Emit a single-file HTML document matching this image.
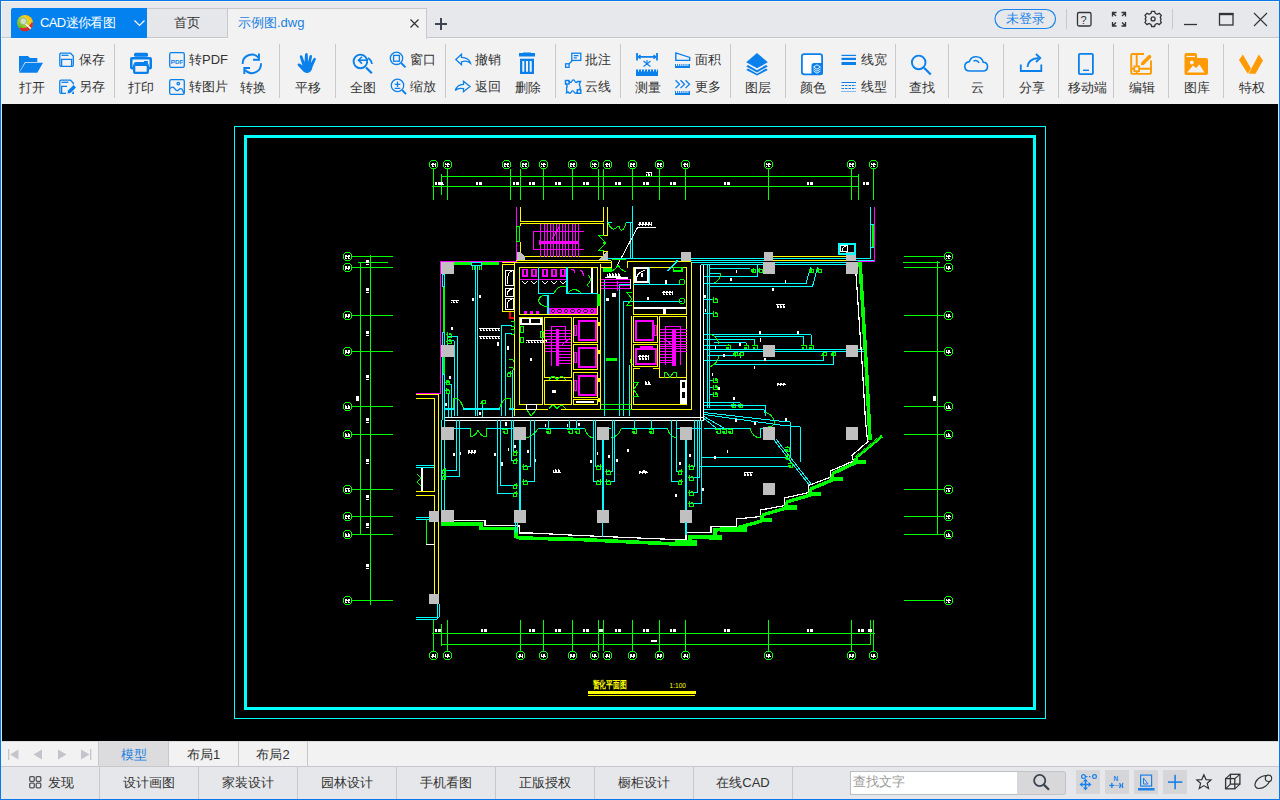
<!DOCTYPE html>
<html><head><meta charset="utf-8">
<style>
*{box-sizing:border-box}
html,body{margin:0;padding:0;width:1280px;height:800px;overflow:hidden;background:#e6e7ea;font-family:"Liberation Sans",sans-serif;}
.a{position:absolute}
#win{position:absolute;left:0;top:0;width:1280px;height:800px;border:1px solid #0a78e8;}
#title{position:absolute;left:1px;top:1px;width:1278px;height:37px;background:#e6e8eb;border-top:1px solid #f7f4f0;border-left:1px solid #f7f4f0;border-bottom:1px solid #c8c8cc}
#tb{position:absolute;left:1px;top:38px;width:1278px;height:66px;background:#f2f2f2;border-top:1px solid #f6f6f6}
#cv{position:absolute;left:2px;top:104px;width:1276px;height:637px;background:#000;}
#tabs{position:absolute;left:0px;top:741px;width:1279px;height:26px;background:#f2f2f2;border-bottom:1px solid #c8c8cc;border-top:1px solid #dcdce0}
#bot{position:absolute;left:1px;top:767px;width:1278px;height:32px;background:#e6e7ea;}
.sep{position:absolute;top:44px;width:1px;height:54px;background:#c9c9cc}
.lbl{position:absolute;font-size:13px;color:#333;white-space:nowrap;line-height:14px}
.big{position:absolute;top:82px;margin-left:1px;font-size:13px;color:#333;white-space:nowrap;line-height:12px;text-align:center;width:50px}
svg{position:absolute;overflow:visible}
.bt{position:absolute;top:767px;height:32px;font-size:13px;color:#333;line-height:32px;text-align:center;border-right:1px solid #c8c8cc}
.lt{position:absolute;top:741px;height:25px;font-size:13px;color:#333;line-height:27px;text-align:center;border-right:1px solid #c8c8cc;width:70px}
</style></head><body>
<div id="win"></div>
<div id="title"></div>
<div id="tb"></div>
<div id="cv"></div>
<div id="tabs"></div>
<div id="bot"></div>

<!-- title bar tabs -->
<div class="a" style="left:11px;top:8px;width:136px;height:30px;background:#0382ef;border-top-left-radius:2px"></div>
<div class="a" style="left:40px;top:14px;font-size:13px;line-height:18px;color:#fff;white-space:nowrap;letter-spacing:-0.6px">CAD迷你看图</div>
<div class="a" style="left:147px;top:8px;width:81px;height:30px;background:#e6e7ea;border:1px solid #c8c8cc;border-left:none"></div>
<div class="a" style="left:174px;top:14px;font-size:13px;line-height:18px;color:#333">首页</div>
<div class="a" style="left:228px;top:8px;width:199px;height:31px;background:#f2f2f2;border:1px solid #c8c8cc;border-bottom:none;border-left:none"></div>
<div class="a" style="left:238px;top:14px;font-size:13px;line-height:18px;color:#1a7fe0">示例图.dwg</div>

<!-- title icons -->
<svg style="left:0;top:0" width="1280" height="40">
<defs><linearGradient id="lg1" x1="0.1" y1="0.9" x2="0.9" y2="0.1"><stop offset="0" stop-color="#5bb02c"/><stop offset="0.45" stop-color="#a6cf2a"/><stop offset="0.75" stop-color="#f5d020"/><stop offset="1" stop-color="#f7b500"/></linearGradient></defs>
<circle cx="25" cy="23" r="8" fill="url(#lg1)"/>
<path d="M33 23 A8 8 0 0 1 19 28.5 L21 27.5 Q27 30 32 22 Z" fill="#d52b2b"/>
<circle cx="23.3" cy="21.3" r="3.3" fill="#cfe3c0" stroke="#9ab58a" stroke-width="1"/>
<path d="M25.6 23.8 L30.8 28.6" stroke="#f4efe6" stroke-width="1.8"/>
<path d="M134.5 20.5 L139.5 25.5 L144.5 20.5" fill="none" stroke="#fff" stroke-width="1.2"/>
<path d="M410.5 19.5 L418.5 27.5 M418.5 19.5 L410.5 27.5" stroke="#333" stroke-width="1.2"/>
<path d="M435 24 H447 M441 18 V30" stroke="#3d4550" stroke-width="2"/>
<rect x="995" y="9.5" width="60.5" height="19" rx="9.5" fill="none" stroke="#1a86ea" stroke-width="1.2"/>
<rect x="1066" y="9" width="1" height="20" fill="#c8c8cc"/>
<rect x="1172" y="9" width="1" height="20" fill="#c8c8cc"/>
<rect x="1077.5" y="12.5" width="13.5" height="13.5" rx="1.5" fill="none" stroke="#333" stroke-width="1.3"/>
<text x="1080.6" y="23.8" font-size="11" font-family="Liberation Sans" fill="#333">?</text>
<g fill="none" stroke="#333" stroke-width="1.3">
<path d="M1112.5 16.5 V12.5 H1116.5 M1112.5 12.5 L1116 16 M1121.5 12.5 H1125.5 V16.5 M1125.5 12.5 L1122 16 M1112.5 22 V26 H1116.5 M1112.5 26 L1116 22.5 M1121.5 26 H1125.5 V22 M1125.5 26 L1122 22.5"/>
<circle cx="1153.1" cy="18.9" r="2"/>
<path d="M1184 24.5 H1197" stroke-width="1.3"/>
<rect x="1219.5" y="13.5" width="13.5" height="11.5" stroke-width="1.3"/>
<path d="M1254 13 L1267 26 M1267 13 L1254 26" stroke-width="1.1"/>
</g>
<rect x="1219" y="13" width="14.3" height="2.2" fill="#333"/>
<path fill="none" stroke="#333" stroke-width="1.3" d="M1151.6 11.3 H1154.6 L1155.2 13.3 L1157.3 14.3 L1159.2 13.2 L1161.3 15.3 L1160.3 17.2 L1161 19.3 L1161 19.3 L1160.4 20.5 L1161.3 22.5 L1159.2 24.6 L1157.3 23.5 L1155.2 24.5 L1154.6 26.5 H1151.6 L1151 24.5 L1149 23.5 L1147 24.6 L1145 22.5 L1146 20.5 L1145.2 18.9 L1146 17.2 L1145 15.3 L1147 13.2 L1149 14.3 L1151 13.3 Z"/>
</svg>
<div class="a" style="left:1006px;top:10px;font-size:13px;line-height:18px;color:#1a86ea">未登录</div>

<!-- separators -->
<div class="sep" style="left:114px"></div>
<div class="sep" style="left:279px"></div>
<div class="sep" style="left:335px"></div>
<div class="sep" style="left:445px"></div>
<div class="sep" style="left:555px"></div>
<div class="sep" style="left:620px"></div>
<div class="sep" style="left:730px"></div>
<div class="sep" style="left:785px"></div>
<div class="sep" style="left:895px"></div>
<div class="sep" style="left:948px"></div>
<div class="sep" style="left:1003px"></div>
<div class="sep" style="left:1058px"></div>
<div class="sep" style="left:1113px"></div>
<div class="sep" style="left:1168px"></div>
<div class="sep" style="left:1223px"></div>

<!-- big labels -->
<div class="big" style="left:6px">打开</div>
<div class="big" style="left:115px">打印</div>
<div class="big" style="left:227px">转换</div>
<div class="big" style="left:282px">平移</div>
<div class="big" style="left:337px">全图</div>
<div class="big" style="left:502px">删除</div>
<div class="big" style="left:622px">测量</div>
<div class="big" style="left:732px">图层</div>
<div class="big" style="left:787px">颜色</div>
<div class="big" style="left:896px">查找</div>
<div class="big" style="left:951px">云</div>
<div class="big" style="left:1006px">分享</div>
<div class="big" style="left:1061px">移动端</div>
<div class="big" style="left:1116px">编辑</div>
<div class="big" style="left:1171px">图库</div>
<div class="big" style="left:1226px">特权</div>

<!-- small labels -->
<div class="lbl" style="left:79px;top:53px">保存</div>
<div class="lbl" style="left:79px;top:80px">另存</div>
<div class="lbl" style="left:189px;top:53px">转PDF</div>
<div class="lbl" style="left:189px;top:80px">转图片</div>
<div class="lbl" style="left:410px;top:53px">窗口</div>
<div class="lbl" style="left:410px;top:80px">缩放</div>
<div class="lbl" style="left:475px;top:53px">撤销</div>
<div class="lbl" style="left:475px;top:80px">返回</div>
<div class="lbl" style="left:585px;top:53px">批注</div>
<div class="lbl" style="left:585px;top:80px">云线</div>
<div class="lbl" style="left:695px;top:53px">面积</div>
<div class="lbl" style="left:695px;top:80px">更多</div>
<div class="lbl" style="left:861px;top:53px">线宽</div>
<div class="lbl" style="left:861px;top:80px">线型</div>

<!--ICONS-->
<!-- open folder -->
<svg style="left:0;top:0" width="1280" height="110">
<g fill="#0a80ec">
<path d="M19 56 H28 L30 58 H37.3 V61.9 H25 L19 72.5 Z"/>
<path d="M25.5 62.8 H43 L37.3 72.8 H19.2 Z"/>
</g>
<g fill="none" stroke="#0a80ec" stroke-width="1.3">
<!-- save -->
<path d="M60 53.2 H70.5 L73.3 56 V65.2 Q73.3 66.3 72.2 66.3 H61 Q59.8 66.3 59.8 65.2 V54.3 Q59.8 53.2 61 53.2 Z"/>
<path d="M61.5 55.3 H68.5"/>
<path d="M61.6 66 V59.3 H71.6 V66"/>
<!-- save as -->
<path d="M66 93.3 H61 Q59.8 93.3 59.8 92.2 V81.3 Q59.8 80.2 61 80.2 H70.5 L73.3 83 V84.5"/>
<path d="M61.5 82.3 H68.5"/>
<path d="M61.6 93 V86.3 H67"/>
<path d="M73.3 91.5 V93.3 H72"/>
<path d="M67.5 93.6 L68 90.6 L73.6 85 L76 87.4 L70.4 93 Z" fill="#0a80ec" stroke="none"/>
<!-- pdf -->
<rect x="169.7" y="52.7" width="14.6" height="14.6" rx="1.6"/>
<!-- image -->
<rect x="169.7" y="79.7" width="14.6" height="14.6" rx="1.6"/>
<circle cx="178.3" cy="83.6" r="1.3"/>
<path d="M170.2 88.5 Q172.5 85.5 175 88.8 Q177 92 179 89.5 Q181 87.5 182.5 90 L184 93.5"/>
<!-- window zoom -->
<circle cx="396.5" cy="58.3" r="6.2"/>
<rect x="393.6" y="55.4" width="5.8" height="5.8"/>
<!-- zoom +- -->
<circle cx="397.5" cy="85.4" r="6.2"/>
<path d="M394.7 84.3 H400.3 M397.5 81.6 V87 M394.7 88.4 H400.3"/>
<!-- undo -->
<path d="M461.5 54.3 L455.8 59.5 L461.5 64.8 V61.8 Q467 60 470.5 63.2 Q469 57.5 461.5 57.3 Z"/>
<!-- redo -->
<path d="M463.5 81.3 L470 86.5 L463.5 91.7 V88.7 Q458 87.5 455.3 90.5 Q457 84.5 463.5 84.3 Z"/>
<!-- annot -->
<rect x="571.8" y="53.2" width="9" height="7.2"/>
<path d="M573.8 55.6 H578.5 M573.8 57.8 H576.8"/>
<rect x="565.6" y="63.8" width="3.5" height="3.5"/>
<path d="M568.8 64 L572.5 60.5"/>
<!-- cloud line -->
<rect x="565.5" y="80.5" width="3.5" height="3.5" stroke-width="1.4"/>
<rect x="577.3" y="89.8" width="3.5" height="3.5" stroke-width="1.4"/>
<path d="M569 81 Q570.5 84 572 81 Q573.5 78.5 575 81.5 Q576 83.5 577.5 81.5 L580.5 81.5 Q578.5 84 580 86.5 Q581 89 579 89.5 M577.3 92 Q575.5 94.5 574 92 Q572.5 89.5 571 92.5 Q569.5 94 568 92 L566.5 93 Q567 90 566.5 88 Q568 86 566 84" stroke-width="1.3"/>
<!-- area -->
<path d="M675.8 52.9 V60.4 H689.7 V57.4 Z" stroke-width="1.4"/>
<!-- more chevrons -->
<path d="M675.5 80.3 L679.5 84.2 L675.5 88.1 M680.5 80.3 L684.5 84.2 L680.5 88.1 M685.5 80.3 L689.5 84.2 L685.5 88.1"/>
<!-- find -->
<circle cx="918.7" cy="62.4" r="6.8" stroke-width="1.9"/>
<!-- cloud -->
<path d="M970 71 H983 Q987.5 71 987.5 66.5 Q987.5 62.3 983.2 62.2 Q982 56.8 976 56.8 Q971 56.8 969.3 61.6 Q964.8 62.3 964.8 66.5 Q964.8 71 970 71 Z" stroke-width="1.6"/>
<path d="M973.5 61 Q977.5 59.5 979 63" stroke-width="1.6"/>
<!-- share -->
<path d="M1020.8 64.5 V71 H1041.3 V64.5" stroke-width="1.8"/>
<path d="M1027.5 67 Q1028 59 1038.5 58" stroke-width="1.8"/>
<path d="M1036 54 L1040.3 58 L1036 62" stroke-width="1.8"/>
<!-- phone -->
<rect x="1078.9" y="53.9" width="14" height="20.2" rx="1" stroke-width="1.8"/>
</g>
<g fill="#0a80ec">
<!-- pdf text -->
<text x="170.8" y="64" font-size="6.2" font-weight="bold" font-family="Liberation Sans" textLength="12.6" lengthAdjust="spacingAndGlyphs">PDF</text>
<!-- printer -->
<rect x="134" y="52.8" width="14" height="4" rx="1.5"/>
<path d="M132 57 H150 Q152 57 152 59 V67.5 Q152 69.5 150 69.5 H149 V66.5 Q149 64 146.5 64 H135.5 Q133 64 133 66.5 V69.5 H132 Q130 69.5 130 67.5 V59 Q130 57 132 57 Z M132.5 59.5 V67 H133 Q133.5 62 136 62 H146 Q148.5 62 149 67 H149.5 V59.5 Z" fill-rule="evenodd"/>
<path d="M135 64 H147 Q149 64 149 66 V72 Q149 74 147 74 H135 Q133 74 133 72 V66 Q133 64 135 64 Z M135.3 66 V71.8 H146.7 V66 Z" fill-rule="evenodd"/>
<rect x="144" y="61" width="4" height="1.8"/>
<!-- trash -->
<rect x="519" y="53" width="16" height="3.5"/>
<rect x="523" y="52.5" width="8" height="2"/>
<path d="M520 58.8 H534 V74 H520 Z M522.3 61 V71.8 H524.3 V61 Z M526 61 V71.8 H528 V61 Z M529.7 61 V71.8 H531.7 V61 Z" fill-rule="evenodd"/>
<!-- area ruler -->
<path d="M675 66 H690 V68 H675 Z"/>
<path d="M675 80.5 Z"/>
<path d="M675 93 H690 V95 H675 Z"/>
<!-- line widths -->
<rect x="841.5" y="54.8" width="14.5" height="1.2"/>
<rect x="841.5" y="57.8" width="14.5" height="2.2"/>
<rect x="841.5" y="62" width="14.5" height="3"/>
</g>
<g stroke="#0a80ec" stroke-width="1" fill="none">
<path d="M675.5 64 V66 M677.6 64 V66 M679.7 64 V66 M681.8 64 V66 M683.9 64 V66 M686 64 V66 M688.1 64 V66 M689.5 64 V66"/>
<path d="M675.5 91 V93 M677.6 91 V93 M679.7 91 V93 M681.8 91 V93 M683.9 91 V93 M686 91 V93 M688.1 91 V93 M689.5 91 V93"/>
<path d="M841.5 82.5 H856" />
<path d="M841.5 85.5 H856" stroke-dasharray="2.5 1"/>
<path d="M841.5 88.5 H856" stroke-dasharray="2.5 1"/>
<path d="M841.5 91.5 H856" stroke-dasharray="1 1"/>
</g>
<!-- zoom handles -->
<g stroke="#0a80ec" stroke-width="1.9" stroke-linecap="butt" fill="none">
<path d="M401.2 63 L405.5 67.3"/>
<path d="M402.2 90.1 L406 94"/>
<path d="M924 67.8 L930.8 74.5" stroke-width="2.2"/>
<!-- refresh -->
<path d="M242.6 64 A9.2 9.2 0 0 1 258.6 57.6"/>
<path d="M261 63.3 A9.2 9.2 0 0 1 245 70"/>
<path d="M259 53.5 V59.8 H253"/>
<path d="M244.3 74 V68 H250"/>
<!-- full view -->
<circle cx="360.4" cy="61.4" r="6.8" stroke-width="1.9"/>
<path d="M366 67.5 L371.8 73.2" stroke-width="2.3"/>
<path d="M368 58 Q371.5 60 372 64" stroke-width="1.6"/>
<path d="M358.5 60.2 H367" stroke-width="1.6"/>
<path d="M362 56.8 L358.5 60.2 L362 63.6" stroke-width="1.6"/>
<!-- measure -->
<path d="M637 53 V60.5 M657 53 V60.5 M638 56.8 H656" stroke-width="1.8"/>
<path d="M640.5 55 L638.3 56.8 L640.5 58.6 M653.5 55 L655.7 56.8 L653.5 58.6" stroke-width="1.5"/>
<path d="M647 60 V65 M643.5 61 L647 64 L650.5 61 M643.5 66.5 L647 64 L650.5 66.5" stroke-width="1.1"/>
<!-- phone bar -->
<path d="M1083 70.3 H1089" stroke-width="1.4"/>
</g>
<g fill="#0a80ec">
<path d="M636 69.5 H658 V76 H636 Z"/>
</g>
<g stroke="#f2f2f2" stroke-width="1">
<path d="M638.5 69.3 V71.5 M641.5 69.3 V71.5 M644.5 69.3 V71.5 M647.5 69.3 V71.5 M650.5 69.3 V71.5 M653.5 69.3 V71.5 M656.5 69.3 V71.5"/>
</g>
<!-- hand -->
<path fill="#0a80ec" d="M302 70 L297.8 65.5 Q297 64 298.5 63.5 Q299.8 63.2 301.2 64.5 L302.5 65.8 L299.8 57 Q299.5 55.5 300.8 55.3 Q302 55.2 302.5 56.5 L304.5 62 L305 54.5 Q305.2 53 306.5 53 Q307.7 53 307.8 54.5 L308 62 L309.5 56 Q310 54.8 311.2 55 Q312.3 55.3 312 56.8 L310.8 63 L313.5 58.5 Q314.3 57.5 315.3 58 Q316.2 58.7 315.6 60 L312.5 67 Q311.5 73 306.5 73 Q304 73 302 70 Z"/>
<!-- layers -->
<g fill="#0a80ec">
<path d="M746.2 62.3 L757 53 L767.8 62.3 L757 68.3 Z"/>
<path d="M746.2 66.5 L748 65 L757 70.2 L766 65 L767.8 66.5 L757 72.5 Z"/>
<path d="M746.2 70 L748 68.5 L757 73.7 L766 68.5 L767.8 70 L757 75.5 Z"/>
</g>
<!-- color -->
<rect x="801.9" y="54.1" width="20.2" height="20.2" rx="2.3" fill="#fff" stroke="#0a80ec" stroke-width="1.8"/>
<path d="M811.5 75 V65.5 Q811.5 63 814 63 H823 V72.5 Q823 75 820.5 75 Z" fill="#0a80ec"/>
<g fill="none" stroke="#fff" stroke-width="0.9">
<path d="M813.5 67 L817 64.8 L820.5 67 L817 69.2 Z"/>
<path d="M813.5 69 L817 71.2 L820.5 69"/>
<path d="M813.5 71 L817 73.2 L820.5 71"/>
</g>
<!-- orange icons -->
<g fill="none" stroke="#ff9a00" stroke-width="1.9">
<path d="M1144 54 H1132.5 Q1131.2 54 1131.2 55.3 V72.6 Q1131.2 73.9 1132.5 73.9 H1149.7 Q1151 73.9 1151 72.6 V60.5"/>
<path d="M1136.7 54 V74 M1131.2 68.8 H1151"/>
</g>
<rect x="1134.3" y="66.4" width="4.8" height="4.8" fill="#f2f2f2" stroke="#ff9a00" stroke-width="1.7"/>
<path d="M1141.2 62.5 L1148.5 55.2 Q1149.5 54.3 1150.5 55.2 L1151 55.8 Q1151.8 56.8 1151 57.7 L1143.7 65 L1141 65.3 Z" fill="#ff9a00"/>
<path d="M1184.5 55 Q1184.5 53 1186.5 53 H1195 Q1197 53 1197 55 V58 H1206 Q1208 58 1208 60 V73 Q1208 75 1206 75 H1186.5 Q1184.5 75 1184.5 73 Z" fill="#ff9a00"/>
<path d="M1186.5 56.5 H1195" stroke="#f2f2f2" stroke-width="1.2"/>
<circle cx="1191.8" cy="62.5" r="1.9" fill="#f2f2f2"/>
<path d="M1187 72.5 L1193 65.5 L1196 68 L1199.5 64.5 L1204.5 72.5 Z" fill="#f2f2f2"/>
<path d="M1239 60 L1242.8 54.5 L1251 68.5 L1247.8 73.8 Z" fill="#ff9a00"/>
<path d="M1248.7 73.8 L1258.8 54.5 L1263 60.5 L1255.5 73.8 Z" fill="#ff9a00"/>
</svg>

<!--/ICONS-->

<!--DRAWING-->
<svg style="left:0;top:0" width="1280" height="800" shape-rendering="crispEdges" fill="none"><defs><pattern id="tp" x="0" y="0" width="3" height="4" patternUnits="userSpaceOnUse"><rect x="0" y="0" width="3" height="1" fill="#fff"/><rect x="0" y="0" width="1" height="4" fill="#fff"/><rect x="1" y="2" width="1" height="2" fill="#fff"/></pattern></defs>
<rect x="234.5" y="126.5" width="811.0" height="592.0" stroke="#00ffff" stroke-width="1" fill="none"/>
<rect x="245.5" y="136.5" width="789.0" height="572.0" stroke="#00ffff" stroke-width="3" fill="none"/>
<circle cx="433.5" cy="164.5" r="4.2" stroke="#00ff00" stroke-width="1.2" fill="none"/>
<rect x="431.0" y="162.5" width="5.0" height="4.0" fill="url(#tp)"/>
<circle cx="447.5" cy="164.5" r="4.2" stroke="#00ff00" stroke-width="1.2" fill="none"/>
<rect x="445.0" y="162.5" width="5.0" height="4.0" fill="url(#tp)"/>
<circle cx="506.5" cy="164.5" r="4.2" stroke="#00ff00" stroke-width="1.2" fill="none"/>
<rect x="504.0" y="162.5" width="5.0" height="4.0" fill="url(#tp)"/>
<circle cx="524.5" cy="164.5" r="4.2" stroke="#00ff00" stroke-width="1.2" fill="none"/>
<rect x="522.0" y="162.5" width="5.0" height="4.0" fill="url(#tp)"/>
<circle cx="543.5" cy="164.5" r="4.2" stroke="#00ff00" stroke-width="1.2" fill="none"/>
<rect x="541.0" y="162.5" width="5.0" height="4.0" fill="url(#tp)"/>
<circle cx="572.5" cy="164.5" r="4.2" stroke="#00ff00" stroke-width="1.2" fill="none"/>
<rect x="570.0" y="162.5" width="5.0" height="4.0" fill="url(#tp)"/>
<circle cx="594.5" cy="164.5" r="4.2" stroke="#00ff00" stroke-width="1.2" fill="none"/>
<rect x="592.0" y="162.5" width="5.0" height="4.0" fill="url(#tp)"/>
<circle cx="607.5" cy="164.5" r="4.2" stroke="#00ff00" stroke-width="1.2" fill="none"/>
<rect x="605.0" y="162.5" width="5.0" height="4.0" fill="url(#tp)"/>
<circle cx="632.5" cy="164.5" r="4.2" stroke="#00ff00" stroke-width="1.2" fill="none"/>
<rect x="630.0" y="162.5" width="5.0" height="4.0" fill="url(#tp)"/>
<circle cx="659.5" cy="164.5" r="4.2" stroke="#00ff00" stroke-width="1.2" fill="none"/>
<rect x="657.0" y="162.5" width="5.0" height="4.0" fill="url(#tp)"/>
<circle cx="685.5" cy="164.5" r="4.2" stroke="#00ff00" stroke-width="1.2" fill="none"/>
<rect x="683.0" y="162.5" width="5.0" height="4.0" fill="url(#tp)"/>
<circle cx="768.5" cy="164.5" r="4.2" stroke="#00ff00" stroke-width="1.2" fill="none"/>
<rect x="766.0" y="162.5" width="5.0" height="4.0" fill="url(#tp)"/>
<circle cx="851.5" cy="164.5" r="4.2" stroke="#00ff00" stroke-width="1.2" fill="none"/>
<rect x="849.0" y="162.5" width="5.0" height="4.0" fill="url(#tp)"/>
<circle cx="873.5" cy="164.5" r="4.2" stroke="#00ff00" stroke-width="1.2" fill="none"/>
<rect x="871.0" y="162.5" width="5.0" height="4.0" fill="url(#tp)"/>
<path d="M433.5 168.5V199.5" stroke="#00ff00" stroke-width="1"/>
<path d="M447.5 168.5V199.5" stroke="#00ff00" stroke-width="1"/>
<path d="M510.5 168.5V199.5" stroke="#00ff00" stroke-width="1"/>
<path d="M520.5 168.5V199.5" stroke="#00ff00" stroke-width="1"/>
<path d="M543.5 168.5V199.5" stroke="#00ff00" stroke-width="1"/>
<path d="M572.5 168.5V199.5" stroke="#00ff00" stroke-width="1"/>
<path d="M598.5 168.5V199.5" stroke="#00ff00" stroke-width="1"/>
<path d="M603.5 168.5V199.5" stroke="#00ff00" stroke-width="1"/>
<path d="M632.5 168.5V199.5" stroke="#00ff00" stroke-width="1"/>
<path d="M659.5 168.5V199.5" stroke="#00ff00" stroke-width="1"/>
<path d="M685.5 168.5V199.5" stroke="#00ff00" stroke-width="1"/>
<path d="M768.5 168.5V199.5" stroke="#00ff00" stroke-width="1"/>
<path d="M851.5 168.5V199.5" stroke="#00ff00" stroke-width="1"/>
<path d="M873.5 168.5V199.5" stroke="#00ff00" stroke-width="1"/>
<path d="M441.5 176.5H858.5" stroke="#00ff00" stroke-width="1"/>
<path d="M432 186.5H858.5" stroke="#00ff00" stroke-width="1"/>
<path d="M441.5 174V195" stroke="#00ff00" stroke-width="1"/>
<path d="M858.5 174V199.5" stroke="#00ff00" stroke-width="1"/>
<rect x="434.5" y="182" width="2.0" height="3" fill="#ffffff"/>
<rect x="437.5" y="182" width="3.0" height="3" fill="#ffffff"/>
<rect x="476.0" y="182" width="2.0" height="3" fill="#ffffff"/>
<rect x="479.0" y="182" width="3.0" height="3" fill="#ffffff"/>
<rect x="512.5" y="182" width="2.0" height="3" fill="#ffffff"/>
<rect x="515.5" y="182" width="3.0" height="3" fill="#ffffff"/>
<rect x="529.0" y="182" width="2.0" height="3" fill="#ffffff"/>
<rect x="532.0" y="182" width="3.0" height="3" fill="#ffffff"/>
<rect x="555.0" y="182" width="2.0" height="3" fill="#ffffff"/>
<rect x="558.0" y="182" width="3.0" height="3" fill="#ffffff"/>
<rect x="582.5" y="182" width="2.0" height="3" fill="#ffffff"/>
<rect x="585.5" y="182" width="3.0" height="3" fill="#ffffff"/>
<rect x="615.0" y="182" width="2.0" height="3" fill="#ffffff"/>
<rect x="618.0" y="182" width="3.0" height="3" fill="#ffffff"/>
<rect x="643.0" y="182" width="2.0" height="3" fill="#ffffff"/>
<rect x="646.0" y="182" width="3.0" height="3" fill="#ffffff"/>
<rect x="669.5" y="182" width="2.0" height="3" fill="#ffffff"/>
<rect x="672.5" y="182" width="3.0" height="3" fill="#ffffff"/>
<rect x="724.0" y="182" width="2.0" height="3" fill="#ffffff"/>
<rect x="727.0" y="182" width="3.0" height="3" fill="#ffffff"/>
<rect x="807.0" y="182" width="2.0" height="3" fill="#ffffff"/>
<rect x="810.0" y="182" width="3.0" height="3" fill="#ffffff"/>
<rect x="863.0" y="182" width="2.0" height="3" fill="#ffffff"/>
<rect x="866.0" y="182" width="3.0" height="3" fill="#ffffff"/>
<rect x="438" y="182" width="6" height="3" fill="url(#tp)"/>
<rect x="646" y="172" width="6" height="4" fill="url(#tp)"/>
<circle cx="433.5" cy="655.5" r="4.2" stroke="#00ff00" stroke-width="1.2" fill="none"/>
<rect x="431.0" y="653.5" width="5.0" height="4.0" fill="url(#tp)"/>
<circle cx="447.5" cy="655.5" r="4.2" stroke="#00ff00" stroke-width="1.2" fill="none"/>
<rect x="445.0" y="653.5" width="5.0" height="4.0" fill="url(#tp)"/>
<circle cx="520.5" cy="655.5" r="4.2" stroke="#00ff00" stroke-width="1.2" fill="none"/>
<rect x="518.0" y="653.5" width="5.0" height="4.0" fill="url(#tp)"/>
<circle cx="543.5" cy="655.5" r="4.2" stroke="#00ff00" stroke-width="1.2" fill="none"/>
<rect x="541.0" y="653.5" width="5.0" height="4.0" fill="url(#tp)"/>
<circle cx="572.5" cy="655.5" r="4.2" stroke="#00ff00" stroke-width="1.2" fill="none"/>
<rect x="570.0" y="653.5" width="5.0" height="4.0" fill="url(#tp)"/>
<circle cx="594.5" cy="655.5" r="4.2" stroke="#00ff00" stroke-width="1.2" fill="none"/>
<rect x="592.0" y="653.5" width="5.0" height="4.0" fill="url(#tp)"/>
<circle cx="607.5" cy="655.5" r="4.2" stroke="#00ff00" stroke-width="1.2" fill="none"/>
<rect x="605.0" y="653.5" width="5.0" height="4.0" fill="url(#tp)"/>
<circle cx="632.5" cy="655.5" r="4.2" stroke="#00ff00" stroke-width="1.2" fill="none"/>
<rect x="630.0" y="653.5" width="5.0" height="4.0" fill="url(#tp)"/>
<circle cx="659.5" cy="655.5" r="4.2" stroke="#00ff00" stroke-width="1.2" fill="none"/>
<rect x="657.0" y="653.5" width="5.0" height="4.0" fill="url(#tp)"/>
<circle cx="685.5" cy="655.5" r="4.2" stroke="#00ff00" stroke-width="1.2" fill="none"/>
<rect x="683.0" y="653.5" width="5.0" height="4.0" fill="url(#tp)"/>
<circle cx="768.5" cy="655.5" r="4.2" stroke="#00ff00" stroke-width="1.2" fill="none"/>
<rect x="766.0" y="653.5" width="5.0" height="4.0" fill="url(#tp)"/>
<circle cx="851.5" cy="655.5" r="4.2" stroke="#00ff00" stroke-width="1.2" fill="none"/>
<rect x="849.0" y="653.5" width="5.0" height="4.0" fill="url(#tp)"/>
<circle cx="873.5" cy="655.5" r="4.2" stroke="#00ff00" stroke-width="1.2" fill="none"/>
<rect x="871.0" y="653.5" width="5.0" height="4.0" fill="url(#tp)"/>
<path d="M433.5 619.5V650.5" stroke="#00ff00" stroke-width="1"/>
<path d="M447.5 619.5V650.5" stroke="#00ff00" stroke-width="1"/>
<path d="M520.5 619.5V650.5" stroke="#00ff00" stroke-width="1"/>
<path d="M543.5 619.5V650.5" stroke="#00ff00" stroke-width="1"/>
<path d="M572.5 619.5V650.5" stroke="#00ff00" stroke-width="1"/>
<path d="M598.5 619.5V650.5" stroke="#00ff00" stroke-width="1"/>
<path d="M603.5 619.5V650.5" stroke="#00ff00" stroke-width="1"/>
<path d="M632.5 619.5V650.5" stroke="#00ff00" stroke-width="1"/>
<path d="M659.5 619.5V650.5" stroke="#00ff00" stroke-width="1"/>
<path d="M685.5 619.5V650.5" stroke="#00ff00" stroke-width="1"/>
<path d="M768.5 619.5V650.5" stroke="#00ff00" stroke-width="1"/>
<path d="M851.5 619.5V650.5" stroke="#00ff00" stroke-width="1"/>
<path d="M873.5 619.5V650.5" stroke="#00ff00" stroke-width="1"/>
<path d="M432 633.5H874.5" stroke="#00ff00" stroke-width="1"/>
<path d="M441 644.5H871" stroke="#00ff00" stroke-width="1"/>
<path d="M441.5 624V646" stroke="#00ff00" stroke-width="1"/>
<path d="M870.5 620V645" stroke="#00ff00" stroke-width="1"/>
<rect x="434.5" y="629" width="2.0" height="3" fill="#ffffff"/>
<rect x="437.5" y="629" width="3.0" height="3" fill="#ffffff"/>
<rect x="481.0" y="629" width="2.0" height="3" fill="#ffffff"/>
<rect x="484.0" y="629" width="3.0" height="3" fill="#ffffff"/>
<rect x="529.0" y="629" width="2.0" height="3" fill="#ffffff"/>
<rect x="532.0" y="629" width="3.0" height="3" fill="#ffffff"/>
<rect x="555.0" y="629" width="2.0" height="3" fill="#ffffff"/>
<rect x="558.0" y="629" width="3.0" height="3" fill="#ffffff"/>
<rect x="582.5" y="629" width="2.0" height="3" fill="#ffffff"/>
<rect x="585.5" y="629" width="3.0" height="3" fill="#ffffff"/>
<rect x="615.0" y="629" width="2.0" height="3" fill="#ffffff"/>
<rect x="618.0" y="629" width="3.0" height="3" fill="#ffffff"/>
<rect x="643.0" y="629" width="2.0" height="3" fill="#ffffff"/>
<rect x="646.0" y="629" width="3.0" height="3" fill="#ffffff"/>
<rect x="669.5" y="629" width="2.0" height="3" fill="#ffffff"/>
<rect x="672.5" y="629" width="3.0" height="3" fill="#ffffff"/>
<rect x="724.0" y="629" width="2.0" height="3" fill="#ffffff"/>
<rect x="727.0" y="629" width="3.0" height="3" fill="#ffffff"/>
<rect x="807.0" y="629" width="2.0" height="3" fill="#ffffff"/>
<rect x="810.0" y="629" width="3.0" height="3" fill="#ffffff"/>
<rect x="858.0" y="629" width="2.0" height="3" fill="#ffffff"/>
<rect x="861.0" y="629" width="3.0" height="3" fill="#ffffff"/>
<rect x="599" y="629" width="4" height="3" fill="#ffffff"/>
<rect x="868" y="629" width="4" height="3" fill="#ffffff"/>
<rect x="651" y="640" width="6" height="2" fill="#ffffff"/>
<circle cx="347.5" cy="256.5" r="4.2" stroke="#00ff00" stroke-width="1.2" fill="none"/>
<rect x="345" y="254.5" width="5" height="4.0" fill="url(#tp)"/>
<path d="M352 256.5H393" stroke="#00ff00" stroke-width="1"/>
<circle cx="347.5" cy="267.5" r="4.2" stroke="#00ff00" stroke-width="1.2" fill="none"/>
<rect x="345" y="265.5" width="5" height="4.0" fill="url(#tp)"/>
<path d="M352 267.5H393" stroke="#00ff00" stroke-width="1"/>
<circle cx="347.5" cy="315.5" r="4.2" stroke="#00ff00" stroke-width="1.2" fill="none"/>
<rect x="345" y="313.5" width="5" height="4.0" fill="url(#tp)"/>
<path d="M352 315.5H393" stroke="#00ff00" stroke-width="1"/>
<circle cx="347.5" cy="351.5" r="4.2" stroke="#00ff00" stroke-width="1.2" fill="none"/>
<rect x="345" y="349.5" width="5" height="4.0" fill="url(#tp)"/>
<path d="M352 351.5H393" stroke="#00ff00" stroke-width="1"/>
<circle cx="347.5" cy="406.5" r="4.2" stroke="#00ff00" stroke-width="1.2" fill="none"/>
<rect x="345" y="404.5" width="5" height="4.0" fill="url(#tp)"/>
<path d="M352 406.5H393" stroke="#00ff00" stroke-width="1"/>
<circle cx="347.5" cy="434.5" r="4.2" stroke="#00ff00" stroke-width="1.2" fill="none"/>
<rect x="345" y="432.5" width="5" height="4.0" fill="url(#tp)"/>
<path d="M352 434.5H393" stroke="#00ff00" stroke-width="1"/>
<circle cx="347.5" cy="489.5" r="4.2" stroke="#00ff00" stroke-width="1.2" fill="none"/>
<rect x="345" y="487.5" width="5" height="4.0" fill="url(#tp)"/>
<path d="M352 489.5H393" stroke="#00ff00" stroke-width="1"/>
<circle cx="347.5" cy="516.5" r="4.2" stroke="#00ff00" stroke-width="1.2" fill="none"/>
<rect x="345" y="514.5" width="5" height="4.0" fill="url(#tp)"/>
<path d="M352 516.5H393" stroke="#00ff00" stroke-width="1"/>
<circle cx="347.5" cy="534.5" r="4.2" stroke="#00ff00" stroke-width="1.2" fill="none"/>
<rect x="345" y="532.5" width="5" height="4.0" fill="url(#tp)"/>
<path d="M352 534.5H393" stroke="#00ff00" stroke-width="1"/>
<circle cx="347.5" cy="600.5" r="4.2" stroke="#00ff00" stroke-width="1.2" fill="none"/>
<rect x="345" y="598.5" width="5" height="4.0" fill="url(#tp)"/>
<path d="M352 600.5H393" stroke="#00ff00" stroke-width="1"/>
<path d="M358 262.5H388" stroke="#00ff00" stroke-width="1"/>
<path d="M360.5 262V535" stroke="#00ff00" stroke-width="1"/>
<path d="M370.5 255V605" stroke="#00ff00" stroke-width="1"/>
<rect x="366" y="260" width="3" height="3" fill="#ffffff"/>
<rect x="366" y="264" width="3" height="1" fill="#ffffff"/>
<rect x="366" y="288" width="3" height="3" fill="#ffffff"/>
<rect x="366" y="292" width="3" height="1" fill="#ffffff"/>
<rect x="366" y="331" width="3" height="3" fill="#ffffff"/>
<rect x="366" y="335" width="3" height="1" fill="#ffffff"/>
<rect x="366" y="375" width="3" height="3" fill="#ffffff"/>
<rect x="366" y="379" width="3" height="1" fill="#ffffff"/>
<rect x="366" y="418" width="3" height="3" fill="#ffffff"/>
<rect x="366" y="422" width="3" height="1" fill="#ffffff"/>
<rect x="366" y="459" width="3" height="3" fill="#ffffff"/>
<rect x="366" y="463" width="3" height="1" fill="#ffffff"/>
<rect x="366" y="495" width="3" height="3" fill="#ffffff"/>
<rect x="366" y="499" width="3" height="1" fill="#ffffff"/>
<rect x="366" y="523" width="3" height="3" fill="#ffffff"/>
<rect x="366" y="527" width="3" height="1" fill="#ffffff"/>
<rect x="366" y="564" width="3" height="3" fill="#ffffff"/>
<rect x="366" y="568" width="3" height="1" fill="#ffffff"/>
<rect x="356" y="396" width="3" height="5" fill="#ffffff"/>
<circle cx="948.5" cy="256.5" r="4.2" stroke="#00ff00" stroke-width="1.2" fill="none"/>
<rect x="946" y="254.5" width="5" height="4.0" fill="url(#tp)"/>
<path d="M904 256.5H944" stroke="#00ff00" stroke-width="1"/>
<circle cx="948.5" cy="267.5" r="4.2" stroke="#00ff00" stroke-width="1.2" fill="none"/>
<rect x="946" y="265.5" width="5" height="4.0" fill="url(#tp)"/>
<path d="M904 267.5H944" stroke="#00ff00" stroke-width="1"/>
<circle cx="948.5" cy="315.5" r="4.2" stroke="#00ff00" stroke-width="1.2" fill="none"/>
<rect x="946" y="313.5" width="5" height="4.0" fill="url(#tp)"/>
<path d="M904 315.5H944" stroke="#00ff00" stroke-width="1"/>
<circle cx="948.5" cy="351.5" r="4.2" stroke="#00ff00" stroke-width="1.2" fill="none"/>
<rect x="946" y="349.5" width="5" height="4.0" fill="url(#tp)"/>
<path d="M904 351.5H944" stroke="#00ff00" stroke-width="1"/>
<circle cx="948.5" cy="406.5" r="4.2" stroke="#00ff00" stroke-width="1.2" fill="none"/>
<rect x="946" y="404.5" width="5" height="4.0" fill="url(#tp)"/>
<path d="M904 406.5H944" stroke="#00ff00" stroke-width="1"/>
<circle cx="948.5" cy="434.5" r="4.2" stroke="#00ff00" stroke-width="1.2" fill="none"/>
<rect x="946" y="432.5" width="5" height="4.0" fill="url(#tp)"/>
<path d="M904 434.5H944" stroke="#00ff00" stroke-width="1"/>
<circle cx="948.5" cy="489.5" r="4.2" stroke="#00ff00" stroke-width="1.2" fill="none"/>
<rect x="946" y="487.5" width="5" height="4.0" fill="url(#tp)"/>
<path d="M904 489.5H944" stroke="#00ff00" stroke-width="1"/>
<circle cx="948.5" cy="516.5" r="4.2" stroke="#00ff00" stroke-width="1.2" fill="none"/>
<rect x="946" y="514.5" width="5" height="4.0" fill="url(#tp)"/>
<path d="M904 516.5H944" stroke="#00ff00" stroke-width="1"/>
<circle cx="948.5" cy="534.5" r="4.2" stroke="#00ff00" stroke-width="1.2" fill="none"/>
<rect x="946" y="532.5" width="5" height="4.0" fill="url(#tp)"/>
<path d="M904 534.5H944" stroke="#00ff00" stroke-width="1"/>
<circle cx="948.5" cy="600.5" r="4.2" stroke="#00ff00" stroke-width="1.2" fill="none"/>
<rect x="946" y="598.5" width="5" height="4.0" fill="url(#tp)"/>
<path d="M904 600.5H944" stroke="#00ff00" stroke-width="1"/>
<path d="M903 262.5H940" stroke="#00ff00" stroke-width="1"/>
<path d="M937.5 261V535" stroke="#00ff00" stroke-width="1"/>
<rect x="933" y="396" width="3" height="5" fill="#ffffff"/>
<text x="592.5" y="687.5" font-size="10" font-family="Liberation Sans" font-weight="bold" fill="#ffff00" textLength="34" lengthAdjust="spacingAndGlyphs">暂化平面图</text>
<text x="669.5" y="687.5" font-size="7.5" font-family="Liberation Sans" fill="#ffff00" textLength="16.5" lengthAdjust="spacingAndGlyphs">1:100</text>
<rect x="588" y="691" width="108" height="3" fill="#ffff00"/>
<path d="M588 695.5H695" stroke="#ffff00" stroke-width="1"/>
<path d="M516 207V262" stroke="#ff00ff" stroke-width="1"/>
<path d="M520.5 207V222" stroke="#ffff00" stroke-width="1"/>
<path d="M520 221.5H604" stroke="#ffff00" stroke-width="1"/>
<path d="M603.5 207V222" stroke="#ffff00" stroke-width="1"/>
<path d="M607.5 207V235" stroke="#ffff00" stroke-width="1"/>
<path d="M603.5 235H607.5" stroke="#ffff00" stroke-width="1"/>
<path d="M521 223.5H604" stroke="#ffff00" stroke-width="1"/>
<path d="M520.5 223V226" stroke="#ffff00" stroke-width="1"/>
<path d="M520.5 242V257" stroke="#ffff00" stroke-width="1"/>
<path d="M603.5 223V235" stroke="#ffff00" stroke-width="1"/>
<path d="M603.5 251V257" stroke="#ffff00" stroke-width="1"/>
<path d="M607.5 251V261" stroke="#ffff00" stroke-width="1"/>
<path d="M603.5 251H607.5" stroke="#ffff00" stroke-width="1"/>
<path d="M521 256.5H604" stroke="#ffff00" stroke-width="1"/>
<path d="M516.5 226V242" stroke="#00ff00" stroke-width="1"/>
<path d="M519.5 226V242" stroke="#00ff00" stroke-width="1"/>
<path d="M516 226.5H520" stroke="#00ff00" stroke-width="1"/>
<path d="M516 241.5H520" stroke="#00ff00" stroke-width="1"/>
<path d="M516.5 252 H520 L525 256.5 V260 H516.5 Z" fill="#c0c0c0"/>
<path d="M598 260 L607.5 251.5 V260 Z" fill="#c0c0c0"/>
<path d="M540.5 224V257" stroke="#ff00ff" stroke-width="1"/>
<path d="M544.5 224V257" stroke="#ff00ff" stroke-width="1"/>
<path d="M547.5 224V257" stroke="#ff00ff" stroke-width="1"/>
<path d="M550.5 224V257" stroke="#ff00ff" stroke-width="1"/>
<path d="M553.5 224V257" stroke="#ff00ff" stroke-width="1"/>
<path d="M556.5 224V257" stroke="#ff00ff" stroke-width="1"/>
<path d="M559.5 224V257" stroke="#ff00ff" stroke-width="1"/>
<path d="M562.5 224V257" stroke="#ff00ff" stroke-width="1"/>
<path d="M565.5 224V257" stroke="#ff00ff" stroke-width="1"/>
<path d="M568.5 224V257" stroke="#ff00ff" stroke-width="1"/>
<path d="M572.5 224V257" stroke="#ff00ff" stroke-width="1"/>
<path d="M575.5 224V257" stroke="#ff00ff" stroke-width="1"/>
<path d="M578.5 224V257" stroke="#ff00ff" stroke-width="1"/>
<path d="M533 231.5H583.5" stroke="#ff00ff" stroke-width="1"/>
<path d="M533 249.5H583.5" stroke="#ff00ff" stroke-width="1"/>
<path d="M533.5 231.5V249.5" stroke="#ff00ff" stroke-width="1"/>
<rect x="539" y="241" width="39" height="3" fill="#ff00ff"/>
<rect x="535.5" y="241" width="5.5" height="3" fill="#000"/>
<rect x="539" y="240" width="2" height="5" fill="#ff00ff"/>
<path d="M552 239 L560 225.5" stroke="#ff00ff" stroke-width="1" fill="none"/>
<path d="M608 222.5 Q612 232 616 228 Q619 224 620 229 Q623 233 626 223" stroke="#00ff00" stroke-width="1" fill="none"/>
<path d="M604 235.5 H598.5 L606 243 L598.5 250.5 H604" stroke="#00ff00" stroke-width="1" fill="none"/>
<rect x="603" y="242" width="3" height="2" fill="#00ff00"/>
<path d="M607 222.5H612" stroke="#00ffff" stroke-width="1"/>
<path d="M626 222.5H633" stroke="#00ffff" stroke-width="1"/>
<path d="M632.5 206V259" stroke="#00ffff" stroke-width="1"/>
<path d="M630.5 222V259" stroke="#00ffff" stroke-width="1"/>
<path d="M617.5 265 L637.5 227.5 L655.5 227.5" stroke="#ffffff" stroke-width="1" fill="none"/>
<rect x="638" y="222" width="14" height="4" fill="url(#tp)"/>
<rect x="616" y="278" width="12" height="2" fill="#ffffff"/>
<path d="M607 258.5H870" stroke="#00ffff" stroke-width="1"/>
<path d="M691 260.5H858" stroke="#00ffff" stroke-width="1"/>
<path d="M516 260.5H611" stroke="#ffff00" stroke-width="1"/>
<path d="M627 261.5H691" stroke="#ffff00" stroke-width="1"/>
<path d="M502 262.5H611" stroke="#ffff00" stroke-width="1"/>
<path d="M611.5 261V268" stroke="#ffff00" stroke-width="1"/>
<path d="M627.5 261V268" stroke="#ffff00" stroke-width="1"/>
<path d="M773 256.5H846" stroke="#ffff00" stroke-width="1"/>
<path d="M773 260.5H846" stroke="#ffff00" stroke-width="1"/>
<path d="M691 262.5H846" stroke="#00ffff" stroke-width="1"/>
<path d="M701 264.5H846" stroke="#00ffff" stroke-width="1"/>
<rect x="681" y="252" width="10" height="9" fill="#c0c0c0"/>
<rect x="764" y="252" width="9" height="9" fill="#c0c0c0"/>
<rect x="846" y="252" width="10" height="9" fill="#c0c0c0"/>
<rect x="763" y="262" width="12" height="12" fill="#c0c0c0"/>
<rect x="846" y="262" width="12" height="12" fill="#c0c0c0"/>
<rect x="839" y="244" width="16" height="9.5" stroke="#00ffff" stroke-width="2" fill="none"/>
<rect x="840" y="245" width="8" height="7" fill="#ffffff"/>
<rect x="841" y="246" width="6" height="5" fill="#000"/>
<path d="M842 251 Q842 247 846 246.5" stroke="#ffffff" stroke-width="1" fill="none"/>
<path d="M874.5 207V261.5" stroke="#ff00ff" stroke-width="1.3"/>
<path d="M858 261.5H874.5" stroke="#ff00ff" stroke-width="1.3"/>
<path d="M870.5 207V258.5" stroke="#00ffff" stroke-width="1"/>
<rect x="872" y="224" width="2" height="24" fill="#00ff00"/>
<path d="M870 224.5H874" stroke="#00ffff" stroke-width="1"/>
<path d="M870 247.5H874" stroke="#00ffff" stroke-width="1"/>
<path d="M856 258.5H870.5" stroke="#00ffff" stroke-width="1"/>
<path d="M856 260.5H874" stroke="#00ffff" stroke-width="1"/>
<path d="M440.5 261V393.5" stroke="#ff00ff" stroke-width="1.3"/>
<path d="M440 261.5H515.5" stroke="#ff00ff" stroke-width="1.3"/>
<path d="M416 393.5H440.5" stroke="#ff00ff" stroke-width="1.3"/>
<rect x="441" y="262" width="13" height="12" fill="#c0c0c0"/>
<rect x="441" y="345" width="13" height="12" fill="#c0c0c0"/>
<path d="M442.5 274V286.5" stroke="#00ffff" stroke-width="1"/>
<path d="M444.5 274V286.5" stroke="#00ffff" stroke-width="1"/>
<path d="M442 286.5H445" stroke="#00ffff" stroke-width="1"/>
<path d="M442 274.5H445" stroke="#00ffff" stroke-width="1"/>
<rect x="443" y="287" width="2" height="45" fill="#00ff00"/>
<path d="M442.5 332V345" stroke="#00ffff" stroke-width="1"/>
<path d="M444.5 332V345" stroke="#00ffff" stroke-width="1"/>
<path d="M442 332.5H445" stroke="#00ffff" stroke-width="1"/>
<path d="M442.5 357V374" stroke="#00ffff" stroke-width="1"/>
<rect x="443" y="357" width="2" height="17" fill="#00ff00"/>
<path d="M442 374.5H445" stroke="#00ffff" stroke-width="1"/>
<rect x="454" y="262" width="17" height="3" fill="#00ff00"/>
<rect x="481" y="262" width="18" height="3" fill="#00ff00"/>
<rect x="471.5" y="262.5" width="10.0" height="3.0" stroke="#00ffff" stroke-width="1" fill="none"/>
<path d="M472 266 V270 M474 266 V270 M479 266 V270 M481 266 V270" stroke="#00ff00" stroke-width="1" fill="none"/>
<path d="M475.5 265V416" stroke="#00ffff" stroke-width="1"/>
<path d="M477.5 265V416" stroke="#00ffff" stroke-width="1"/>
<rect x="472" y="298" width="2" height="3" fill="#ffffff"/>
<rect x="479" y="295" width="2" height="3" fill="#ffffff"/>
<rect x="451" y="300" width="8" height="3" fill="url(#tp)"/>
<rect x="502.5" y="264.5" width="12.0" height="47.0" stroke="#ffff00" stroke-width="1" fill="none"/>
<rect x="505.5" y="270.5" width="8.0" height="15.0" stroke="#ffffff" stroke-width="1" fill="none"/>
<rect x="505.5" y="288.5" width="8.0" height="8.0" stroke="#ffffff" stroke-width="1" fill="none"/>
<rect x="505.5" y="298.5" width="8.0" height="11.0" stroke="#ffffff" stroke-width="1" fill="none"/>
<path d="M507 284 Q507 272 512 271" stroke="#ffffff" stroke-width="1" fill="none"/>
<path d="M507 295 Q507 290 512 289" stroke="#ffffff" stroke-width="1" fill="none"/>
<path d="M507 308 Q507 300 512 299" stroke="#ffffff" stroke-width="1" fill="none"/>
<path d="M508.5 312 H511 V317 H514.5 V319 H508.5 Z" fill="#ff0000"/>
<path d="M514.5 262V416" stroke="#ffff00" stroke-width="1"/>
<path d="M501.5 325V416" stroke="#00ffff" stroke-width="1"/>
<path d="M501 325.5H512" stroke="#00ffff" stroke-width="1"/>
<path d="M505.5 333V416" stroke="#00ffff" stroke-width="1"/>
<path d="M505 333.5H512" stroke="#00ffff" stroke-width="1"/>
<path d="M511 322 Q515 320 515 324 Q515 328 511 326 M511 330 Q515 328 515 332 Q515 335 511 334" stroke="#00ff00" stroke-width="1" fill="none"/>
<path d="M509 360 Q514 358 514 362 M509 368 Q514 366 514 370" stroke="#00ff00" stroke-width="1" fill="none"/>
<rect x="479" y="328" width="21" height="3" fill="url(#tp)"/>
<rect x="479" y="336" width="21" height="3" fill="url(#tp)"/>
<rect x="497" y="342" width="2" height="4" fill="#ffffff"/>
<rect x="507" y="346" width="2" height="4" fill="#ffffff"/>
<path d="M447 335V345" stroke="#00ffff" stroke-width="1"/>
<path d="M454 340.5V416" stroke="#00ffff" stroke-width="1"/>
<path d="M457.5 337V416" stroke="#00ffff" stroke-width="1"/>
<path d="M447 336.5H457.5" stroke="#00ffff" stroke-width="1"/>
<path d="M447 340.5H454" stroke="#00ffff" stroke-width="1"/>
<path d="M446 334.5H447.5 M447.5 332.0V337.0H451V333.5" stroke="#00ff00" stroke-width="1" fill="none"/>
<rect x="448.5" y="332.5" width="2.0" height="2.5" fill="#00ff00"/>
<path d="M446 341H447.5 M447.5 338.5V343.5H451V340" stroke="#00ff00" stroke-width="1" fill="none"/>
<rect x="448.5" y="339" width="2.0" height="2.5" fill="#00ff00"/>
<path d="M451 384V417" stroke="#00ffff" stroke-width="1"/>
<path d="M448.5 393V417" stroke="#00ffff" stroke-width="1"/>
<path d="M446 384.5H451" stroke="#00ffff" stroke-width="1"/>
<path d="M446 393.5H448.5" stroke="#00ffff" stroke-width="1"/>
<path d="M444.5 382H446.0 M446.0 379.5V384.5H449.5V381" stroke="#00ff00" stroke-width="1" fill="none"/>
<rect x="447.0" y="380" width="2.0" height="2.5" fill="#00ff00"/>
<path d="M444.5 390.5H446.0 M446.0 388.0V393.0H449.5V389.5" stroke="#00ff00" stroke-width="1" fill="none"/>
<rect x="447.0" y="388.5" width="2.0" height="2.5" fill="#00ff00"/>
<path d="M442.5 374V420" stroke="#00ffff" stroke-width="1"/>
<path d="M444.5 374V420" stroke="#00ffff" stroke-width="1"/>
<path d="M444 408.5H454" stroke="#00ffff" stroke-width="2"/>
<path d="M463 408.5H500" stroke="#00ffff" stroke-width="2"/>
<path d="M509 408.5H514" stroke="#00ffff" stroke-width="2"/>
<path d="M453.5 408 V398.5 H457.5 Q461 401 463.5 408" stroke="#00ff00" stroke-width="1" fill="none"/>
<path d="M499.5 408 Q502 401 506 398.5 H510 V408" stroke="#00ff00" stroke-width="1" fill="none"/>
<path d="M482.5 405V417" stroke="#00ffff" stroke-width="1"/>
<path d="M482.5 405V403.5 M480.0 403.5H485.0V400H481.5" stroke="#00ff00" stroke-width="1" fill="none"/>
<rect x="480.5" y="400.5" width="2.5" height="2.0" fill="#00ff00"/>
<path d="M512 370V417" stroke="#00ffff" stroke-width="1"/>
<path d="M512 373.5H510.5 M510.5 371.0V376.0H507V372.5" stroke="#00ff00" stroke-width="1" fill="none"/>
<rect x="507.5" y="371.5" width="2.0" height="2.5" fill="#00ff00"/>
<rect x="449" y="376" width="2" height="3" fill="#ffffff"/>
<rect x="445" y="403" width="2" height="3" fill="#ffffff"/>
<rect x="479" y="412" width="2" height="3" fill="#ffffff"/>
<rect x="451" y="327" width="2" height="3" fill="#ffffff"/>
<path d="M438.5 394V600" stroke="#ffff00" stroke-width="1"/>
<path d="M416 394.5H438.5" stroke="#ffff00" stroke-width="1"/>
<path d="M434.5 398V491" stroke="#ffff00" stroke-width="1"/>
<path d="M416 398.5H434.5" stroke="#ffff00" stroke-width="1"/>
<path d="M416 491.5H434.5" stroke="#ffff00" stroke-width="1"/>
<path d="M416 495.5H434.5" stroke="#ffff00" stroke-width="1"/>
<path d="M434.5 495V598" stroke="#ffff00" stroke-width="1"/>
<path d="M416 465.5H434" stroke="#00ffff" stroke-width="1"/>
<path d="M416 467.5H434" stroke="#00ffff" stroke-width="1"/>
<path d="M422 468V491" stroke="#ffffff" stroke-width="2"/>
<path d="M417 474 L421 478 L417 482 L421 486" stroke="#00ff00" stroke-width="1" fill="none"/>
<rect x="519.5" y="267.5" width="78.0" height="47.0" stroke="#ffff00" stroke-width="1" fill="none"/>
<rect x="522" y="269" width="6" height="8" fill="#ff00ff"/>
<rect x="524" y="270" width="2" height="5" fill="#000"/>
<rect x="531" y="269" width="6" height="8" fill="#ff00ff"/>
<rect x="533" y="270" width="2" height="5" fill="#000"/>
<rect x="542" y="269" width="6" height="8" fill="#ff00ff"/>
<rect x="544" y="270" width="2" height="5" fill="#000"/>
<rect x="551" y="269" width="6" height="8" fill="#ff00ff"/>
<rect x="553" y="270" width="2" height="5" fill="#000"/>
<rect x="560" y="269" width="6" height="8" fill="#ff00ff"/>
<rect x="562" y="270" width="2" height="5" fill="#000"/>
<path d="M520 279.5H567" stroke="#ff00ff" stroke-width="1"/>
<path d="M522 281 L525 284 L528 281" stroke="#ffffff" stroke-width="1" fill="none"/>
<path d="M531 281 L534 284 L537 281" stroke="#ffffff" stroke-width="1" fill="none"/>
<path d="M542 281 L545 284 L548 281" stroke="#ffffff" stroke-width="1" fill="none"/>
<path d="M551 281 L554 284 L557 281" stroke="#ffffff" stroke-width="1" fill="none"/>
<path d="M560 281 L563 284 L566 281" stroke="#ffffff" stroke-width="1" fill="none"/>
<path d="M538.5 267V293.5" stroke="#00ffff" stroke-width="1.3"/>
<path d="M538 293.5H554" stroke="#00ffff" stroke-width="1.3"/>
<path d="M568 293.5H597" stroke="#00ffff" stroke-width="1.3"/>
<path d="M567 267V293.5" stroke="#00ffff" stroke-width="1.3"/>
<path d="M548 295V314" stroke="#00ffff" stroke-width="1.3"/>
<path d="M544 295.5H549" stroke="#00ffff" stroke-width="1"/>
<path d="M554 293 Q558 285 566 287 M568 293 Q574 286 581 293" stroke="#00ff00" stroke-width="1" fill="none"/>
<path d="M544 295 Q538 297 539 302 Q541 306 548 307" stroke="#00ff00" stroke-width="1" fill="none"/>
<rect x="549" y="308" width="48" height="6" fill="#ff00ff"/>
<circle cx="553.0" cy="311" r="1.8" stroke="#000" stroke-width="0.8" fill="none"/>
<circle cx="559.5" cy="311" r="1.8" stroke="#000" stroke-width="0.8" fill="none"/>
<circle cx="566.0" cy="311" r="1.8" stroke="#000" stroke-width="0.8" fill="none"/>
<circle cx="572.5" cy="311" r="1.8" stroke="#000" stroke-width="0.8" fill="none"/>
<circle cx="579.0" cy="311" r="1.8" stroke="#000" stroke-width="0.8" fill="none"/>
<circle cx="585.5" cy="311" r="1.8" stroke="#000" stroke-width="0.8" fill="none"/>
<circle cx="592.0" cy="311" r="1.8" stroke="#000" stroke-width="0.8" fill="none"/>
<rect x="591" y="267" width="2" height="26" fill="#ffffff"/>
<path d="M571 270 Q575 269 575 273 M580 270 Q584 272 583 276" stroke="#ff00ff" stroke-width="1" fill="none"/>
<path d="M588 275 Q592 278 589 283 Q586 285 589 287" stroke="#00ff00" stroke-width="1" fill="none"/>
<rect x="524" y="311" width="3" height="3" fill="#ff00ff"/>
<rect x="530" y="311" width="3" height="3" fill="#ff00ff"/>
<rect x="536" y="311" width="3" height="3" fill="#ff00ff"/>
<path d="M600.5 264V409" stroke="#ffff00" stroke-width="1"/>
<path d="M514 409.5H548" stroke="#ffff00" stroke-width="1"/>
<path d="M561 409.5H600" stroke="#ffff00" stroke-width="1"/>
<rect x="519.5" y="317.5" width="23.0" height="87.0" stroke="#ffff00" stroke-width="1" fill="none"/>
<rect x="520" y="318" width="22" height="7" fill="#ffffff"/>
<rect x="522" y="319" width="7" height="4" fill="#000"/>
<rect x="531" y="319" width="9" height="4" fill="#000"/>
<rect x="520.5" y="326.5" width="3.0" height="6.0" stroke="#00ff00" stroke-width="1" fill="none"/>
<rect x="520.5" y="337.5" width="3.0" height="5.0" stroke="#00ff00" stroke-width="1" fill="none"/>
<rect x="540.5" y="331.5" width="3.0" height="6.0" stroke="#00ff00" stroke-width="1" fill="none"/>
<rect x="530" y="358" width="2" height="3" fill="#ffffff"/>
<rect x="526" y="340" width="21" height="3" fill="url(#tp)"/>
<rect x="544.5" y="317.5" width="27.0" height="60.0" stroke="#ffff00" stroke-width="1" fill="none"/>
<rect x="544.5" y="380.5" width="27.0" height="24.0" stroke="#ffff00" stroke-width="1" fill="none"/>
<path d="M545 330.5H571" stroke="#ff00ff" stroke-width="1"/>
<path d="M545 333.5H571" stroke="#ff00ff" stroke-width="1"/>
<path d="M545 336.5H571" stroke="#ff00ff" stroke-width="1"/>
<path d="M545 339.5H571" stroke="#ff00ff" stroke-width="1"/>
<path d="M545 342.5H571" stroke="#ff00ff" stroke-width="1"/>
<path d="M545 345.5H571" stroke="#ff00ff" stroke-width="1"/>
<path d="M545 348.5H571" stroke="#ff00ff" stroke-width="1"/>
<path d="M545 351.5H571" stroke="#ff00ff" stroke-width="1"/>
<path d="M556 354.5H571" stroke="#ff00ff" stroke-width="1"/>
<path d="M556 357.5H571" stroke="#ff00ff" stroke-width="1"/>
<path d="M556 360.5H571" stroke="#ff00ff" stroke-width="1"/>
<path d="M556 363.5H571" stroke="#ff00ff" stroke-width="1"/>
<path d="M551 326.5H566" stroke="#ff00ff" stroke-width="1"/>
<path d="M551 326V365.5" stroke="#ff00ff" stroke-width="1"/>
<path d="M565.5 326V340" stroke="#ff00ff" stroke-width="1"/>
<rect x="555.5" y="329" width="3.5" height="37" fill="#ff00ff"/>
<path d="M562 345 L570 338" stroke="#ff00ff" stroke-width="1" fill="none"/>
<path d="M549 380 Q553 373 557 380 Q561 373 566 380" stroke="#00ff00" stroke-width="1" fill="none"/>
<rect x="552" y="390" width="4" height="3" fill="#ffffff"/>
<path d="M549 409 Q553 402 557 409 Q561 402 566 409" stroke="#00ff00" stroke-width="1" fill="none"/>
<rect x="526.5" y="404.5" width="10.0" height="5.0" stroke="#ffffff" stroke-width="1" fill="none"/>
<path d="M527 410 L531 416 L536 410" stroke="#00ff00" stroke-width="1" fill="none"/>
<rect x="573.5" y="317.5" width="24.0" height="25.0" stroke="#ffff00" stroke-width="1" fill="none"/>
<rect x="579" y="321.0" width="17" height="18.5" stroke="#ff00ff" stroke-width="2" fill="none"/>
<rect x="574.5" y="325.5" width="2.0" height="10.0" stroke="#ff00ff" stroke-width="1" fill="none"/>
<rect x="573.5" y="344.5" width="24.0" height="25.0" stroke="#ffff00" stroke-width="1" fill="none"/>
<rect x="579" y="348.0" width="17" height="18.5" stroke="#ff00ff" stroke-width="2" fill="none"/>
<rect x="574.5" y="352.5" width="2.0" height="10.0" stroke="#ff00ff" stroke-width="1" fill="none"/>
<rect x="573.5" y="372.5" width="24.0" height="25.0" stroke="#ffff00" stroke-width="1" fill="none"/>
<rect x="579" y="376.0" width="17" height="18.5" stroke="#ff00ff" stroke-width="2" fill="none"/>
<rect x="574.5" y="380.5" width="2.0" height="10.0" stroke="#ff00ff" stroke-width="1" fill="none"/>
<rect x="573.5" y="399.5" width="24.0" height="5.0" stroke="#ffff00" stroke-width="1" fill="none"/>
<rect x="576" y="401" width="18" height="2" fill="#ffffff"/>
<rect x="598" y="322" width="3" height="4" fill="#ffff00"/>
<rect x="598" y="350" width="3" height="4" fill="#ffff00"/>
<rect x="598" y="378" width="3" height="4" fill="#ffff00"/>
<rect x="598" y="398" width="3" height="4" fill="#ffff00"/>
<path d="M604.5 279V416" stroke="#00ffff" stroke-width="1"/>
<path d="M619.5 284V416" stroke="#00ffff" stroke-width="1"/>
<path d="M623.5 301V416" stroke="#00ffff" stroke-width="1"/>
<path d="M629.5 365V416" stroke="#00ffff" stroke-width="1"/>
<path d="M619.5 284.5H630" stroke="#00ffff" stroke-width="1"/>
<path d="M601 279.5H630" stroke="#ff00ff" stroke-width="1"/>
<path d="M601 282.5H630" stroke="#ff00ff" stroke-width="1"/>
<path d="M601 285.5H630" stroke="#ff00ff" stroke-width="1"/>
<path d="M601 288.5H630" stroke="#ff00ff" stroke-width="1"/>
<path d="M617.5 281V291" stroke="#ff00ff" stroke-width="1.5"/>
<path d="M630.5 279V289" stroke="#ffffff" stroke-width="1"/>
<path d="M605 277.5H628" stroke="#ffffff" stroke-width="1"/>
<rect x="607" y="273" width="14" height="4" fill="url(#tp)"/>
<path d="M623.5 301.5H682" stroke="#00ffff" stroke-width="1"/>
<path d="M600 404.5H632" stroke="#00ff00" stroke-width="1"/>
<path d="M600 409.5H632" stroke="#00ff00" stroke-width="1"/>
<rect x="606" y="358" width="11" height="3" fill="#00ff00"/>
<path d="M634 366 Q628 362 632 358" stroke="#00ff00" stroke-width="1" fill="none"/>
<rect x="612" y="293" width="4" height="4" fill="#ffffff"/>
<rect x="606" y="298" width="3" height="3" fill="#ffffff"/>
<path d="M612 259.5H626" stroke="#00ff00" stroke-width="1"/>
<rect x="603" y="268" width="8.5" height="4" fill="#00ff00"/>
<path d="M611.5 271 Q615 270 618 265.5 Q621 270 626 272" stroke="#00ff00" stroke-width="1" fill="none"/>
<path d="M632 292.5 H627 L632 299 L627 305 H632" stroke="#00ff00" stroke-width="1" fill="none"/>
<path d="M597.5 267V294" stroke="#ffff00" stroke-width="1"/>
<path d="M600.5 267V409" stroke="#ffff00" stroke-width="1"/>
<path d="M590 267.5H597.5" stroke="#ffff00" stroke-width="1"/>
<path d="M600.5 267.5H611" stroke="#ffff00" stroke-width="1"/>
<path d="M611.5 262V267.5" stroke="#ffff00" stroke-width="1"/>
<path d="M591.5 267.5V293" stroke="#ffffff" stroke-width="1.5"/>
<path d="M590 293.5H597.5" stroke="#00ffff" stroke-width="1"/>
<rect x="597" y="294" width="3" height="12" fill="#00ff00"/>
<path d="M631.5 316V409" stroke="#ffff00" stroke-width="1"/>
<path d="M691.5 262V409" stroke="#ffff00" stroke-width="1"/>
<path d="M632 409.5H692" stroke="#ffff00" stroke-width="1"/>
<rect x="633.5" y="267.5" width="53.0" height="47.0" stroke="#ffff00" stroke-width="1" fill="none"/>
<rect x="634" y="267" width="15" height="16" fill="#ffffff"/>
<rect x="635.5" y="269" width="11.5" height="12" fill="#000"/>
<path d="M636 282 Q636 272 645 270.5" stroke="#ffffff" stroke-width="1" fill="none"/>
<rect x="641" y="273" width="2" height="4" fill="#ffffff"/>
<path d="M649.5 267V284" stroke="#00ffff" stroke-width="1.3"/>
<path d="M633 284.5H682" stroke="#00ffff" stroke-width="1.3"/>
<rect x="634" y="307" width="52" height="2" fill="#ffffff"/>
<circle cx="682" cy="282" r="2.6" stroke="#00ff00" stroke-width="1" fill="none"/>
<circle cx="682" cy="301" r="2.6" stroke="#00ff00" stroke-width="1" fill="none"/>
<rect x="673.5" y="267.5" width="8.5" height="3.5" stroke="#00ff00" stroke-width="1.2" fill="none"/>
<path d="M667.5 271 L677.5 260.5" stroke="#00ffff" stroke-width="1.5" fill="none"/>
<rect x="662" y="291" width="11" height="4" fill="url(#tp)"/>
<rect x="665" y="280" width="2" height="4" fill="#ffffff"/>
<rect x="647" y="297" width="2" height="3" fill="#ffffff"/>
<rect x="663" y="309" width="3" height="5" fill="#ffffff"/>
<rect x="633.5" y="316.5" width="24.0" height="26.0" stroke="#ffff00" stroke-width="1" fill="none"/>
<rect x="633.5" y="344.5" width="24.0" height="22.0" stroke="#ffff00" stroke-width="1" fill="none"/>
<rect x="636" y="320.5" width="16.5" height="19.5" stroke="#ff00ff" stroke-width="2" fill="none"/>
<rect x="654.5" y="325.5" width="2.0" height="10.0" stroke="#ff00ff" stroke-width="1" fill="none"/>
<rect x="636" y="348.5" width="20" height="15.5" stroke="#ff00ff" stroke-width="2" fill="none"/>
<path d="M639.5 346.5H652.5" stroke="#ff00ff" stroke-width="2"/>
<rect x="638" y="355" width="11" height="5" fill="url(#tp)"/>
<rect x="659.5" y="316.5" width="27.0" height="61.0" stroke="#ffff00" stroke-width="1" fill="none"/>
<path d="M665.5 326.5H680.5" stroke="#ff00ff" stroke-width="1"/>
<path d="M665.5 326V365" stroke="#ff00ff" stroke-width="1"/>
<path d="M680.5 326V365" stroke="#ff00ff" stroke-width="1"/>
<path d="M660 329.5H687" stroke="#ff00ff" stroke-width="1"/>
<path d="M660 332.5H687" stroke="#ff00ff" stroke-width="1"/>
<path d="M660 335.5H687" stroke="#ff00ff" stroke-width="1"/>
<path d="M660 338.5H687" stroke="#ff00ff" stroke-width="1"/>
<path d="M660 341.5H687" stroke="#ff00ff" stroke-width="1"/>
<path d="M660 344.5H687" stroke="#ff00ff" stroke-width="1"/>
<path d="M660 346.5H687" stroke="#ff00ff" stroke-width="1"/>
<path d="M660 348.5H687" stroke="#ff00ff" stroke-width="1"/>
<path d="M660 351.5H687" stroke="#ff00ff" stroke-width="1"/>
<path d="M660 354.5H675.5" stroke="#ff00ff" stroke-width="1"/>
<path d="M660 357.5H675.5" stroke="#ff00ff" stroke-width="1"/>
<path d="M660 360.5H675.5" stroke="#ff00ff" stroke-width="1"/>
<path d="M660 362.5H675.5" stroke="#ff00ff" stroke-width="1"/>
<rect x="672" y="329" width="3.5" height="37" fill="#ff00ff"/>
<path d="M663 338 L672 345" stroke="#ff00ff" stroke-width="1" fill="none"/>
<path d="M664 378 V372.5 Q667 371 670 378 Q673 371 676 372.5 V378" stroke="#00ff00" stroke-width="1" fill="none"/>
<path d="M633.5 368.5H640" stroke="#ffff00" stroke-width="1"/>
<path d="M652.5 368.5H659.5" stroke="#ffff00" stroke-width="1"/>
<path d="M633.5 368V404.5" stroke="#ffff00" stroke-width="1"/>
<path d="M686.5 377V404.5" stroke="#ffff00" stroke-width="1"/>
<path d="M633.5 404.5H686.5" stroke="#ffff00" stroke-width="1"/>
<rect x="680" y="379.5" width="6.5" height="24.5" fill="#ffffff"/>
<rect x="682" y="382" width="3" height="6" fill="#000"/>
<rect x="682" y="392" width="3" height="6" fill="#000"/>
<rect x="645" y="381" width="6" height="4" fill="url(#tp)"/>
<path d="M633 382.5 H638.5 L633.5 389.5 L638.5 396.5 H633" stroke="#00ff00" stroke-width="1" fill="none"/>
<path d="M445 417.5H703.5" stroke="#ffffff" stroke-width="1"/>
<path d="M445 420.5H703.5" stroke="#ffffff" stroke-width="1"/>
<path d="M700.5 265V420" stroke="#ffffff" stroke-width="1"/>
<path d="M703.5 265V420" stroke="#ffffff" stroke-width="1"/>
<path d="M707.5 265V408" stroke="#00ffff" stroke-width="1"/>
<path d="M709.5 265V408" stroke="#00ffff" stroke-width="1"/>
<path d="M709 268.5H750" stroke="#00ffff" stroke-width="1"/>
<path d="M753 267.5V269.0 M750.5 269.0H755.5V272.5H752" stroke="#00ff00" stroke-width="1" fill="none"/>
<rect x="751" y="270.0" width="2.5" height="2.0" fill="#00ff00"/>
<path d="M759.5 267.5V269.0 M757.0 269.0H762.0V272.5H758.5" stroke="#00ff00" stroke-width="1" fill="none"/>
<rect x="757.5" y="270.0" width="2.5" height="2.0" fill="#00ff00"/>
<path d="M757.5 264V276.5" stroke="#00ffff" stroke-width="1"/>
<path d="M704 276.5H757.5" stroke="#00ffff" stroke-width="1"/>
<path d="M709 273.5H720" stroke="#00ffff" stroke-width="1"/>
<path d="M720 273.5 Q722 276 718 280 Q714 284 711 284" stroke="#00ff00" stroke-width="1" fill="none"/>
<path d="M704 283.5H806" stroke="#00ffff" stroke-width="1"/>
<path d="M806 283.5 L810.5 267.5" stroke="#00ffff" stroke-width="1" fill="none"/>
<path d="M811 267.5V269.0 M808.5 269.0H813.5V272.5H810" stroke="#00ff00" stroke-width="1" fill="none"/>
<rect x="809" y="270.0" width="2.5" height="2.0" fill="#00ff00"/>
<path d="M709 286.5H812.5" stroke="#00ffff" stroke-width="1"/>
<path d="M812.5 286.5 L817.5 267.5" stroke="#00ffff" stroke-width="1" fill="none"/>
<path d="M818.5 267.5V269.0 M816.0 269.0H821.0V272.5H817.5" stroke="#00ff00" stroke-width="1" fill="none"/>
<rect x="816.5" y="270.0" width="2.5" height="2.0" fill="#00ff00"/>
<path d="M704 299.5H712" stroke="#00ffff" stroke-width="1"/>
<path d="M712 299.5H713.5 M713.5 297.0V302.0H717V298.5" stroke="#00ff00" stroke-width="1" fill="none"/>
<rect x="714.5" y="297.5" width="2.0" height="2.5" fill="#00ff00"/>
<path d="M704 313.5H712" stroke="#00ffff" stroke-width="1"/>
<path d="M712 313.5H713.5 M713.5 311.0V316.0H717V312.5" stroke="#00ff00" stroke-width="1" fill="none"/>
<rect x="714.5" y="311.5" width="2.0" height="2.5" fill="#00ff00"/>
<rect x="736" y="270" width="1" height="3" fill="#ffffff"/>
<rect x="730" y="278" width="2" height="3" fill="#ffffff"/>
<rect x="785" y="280" width="1" height="3" fill="#ffffff"/>
<rect x="772" y="288" width="2" height="3" fill="#ffffff"/>
<rect x="704" y="295" width="2" height="3" fill="#ffffff"/>
<rect x="705" y="309" width="1" height="3" fill="#ffffff"/>
<rect x="776" y="304" width="9" height="4" fill="url(#tp)"/>
<rect x="797" y="331" width="2" height="3" fill="#ffffff"/>
<path d="M704 334.5H811" stroke="#00ffff" stroke-width="1"/>
<path d="M811 334.5V344" stroke="#00ffff" stroke-width="1"/>
<path d="M811 344V345.5 M808.5 345.5H813.5V349H810" stroke="#00ff00" stroke-width="1" fill="none"/>
<rect x="809" y="346.5" width="2.5" height="2.0" fill="#00ff00"/>
<path d="M714 336.5H803.5" stroke="#00ffff" stroke-width="1"/>
<path d="M803.5 336.5V344" stroke="#00ffff" stroke-width="1"/>
<path d="M803.5 344V345.5 M801.0 345.5H806.0V349H802.5" stroke="#00ff00" stroke-width="1" fill="none"/>
<rect x="801.5" y="346.5" width="2.5" height="2.0" fill="#00ff00"/>
<path d="M704 339.5H754.5" stroke="#00ffff" stroke-width="1"/>
<path d="M754.5 339.5V344" stroke="#00ffff" stroke-width="1"/>
<path d="M754.5 344V345.5 M752.0 345.5H757.0V349H753.5" stroke="#00ff00" stroke-width="1" fill="none"/>
<rect x="752.5" y="346.5" width="2.5" height="2.0" fill="#00ff00"/>
<path d="M714 342.5H746" stroke="#00ffff" stroke-width="1"/>
<path d="M746 342.5V344" stroke="#00ffff" stroke-width="1"/>
<path d="M746 344V345.5 M743.5 345.5H748.5V349H745" stroke="#00ff00" stroke-width="1" fill="none"/>
<rect x="744" y="346.5" width="2.5" height="2.0" fill="#00ff00"/>
<path d="M704 345.5H726" stroke="#00ffff" stroke-width="1"/>
<path d="M728 344V345.5 M725.5 345.5H730.5V349H727" stroke="#00ff00" stroke-width="1" fill="none"/>
<rect x="726" y="346.5" width="2.5" height="2.0" fill="#00ff00"/>
<path d="M704 349.5H866" stroke="#00ffff" stroke-width="1"/>
<path d="M710 351.5H866" stroke="#00ffff" stroke-width="1"/>
<path d="M708 355.5H735" stroke="#00ffff" stroke-width="1"/>
<path d="M735 357V355.5 M732.5 355.5H737.5V352H734" stroke="#00ff00" stroke-width="1" fill="none"/>
<rect x="733" y="352.5" width="2.5" height="2.0" fill="#00ff00"/>
<path d="M740.5 357V355.5 M738.0 355.5H743.0V352H739.5" stroke="#00ff00" stroke-width="1" fill="none"/>
<rect x="738.5" y="352.5" width="2.5" height="2.0" fill="#00ff00"/>
<path d="M740.5 357V358" stroke="#00ffff" stroke-width="1"/>
<path d="M704 360.5H823.5" stroke="#00ffff" stroke-width="1"/>
<path d="M823.5 357V360.5" stroke="#00ffff" stroke-width="1"/>
<path d="M823.5 357V355.5 M821.0 355.5H826.0V352H822.5" stroke="#00ff00" stroke-width="1" fill="none"/>
<rect x="821.5" y="352.5" width="2.5" height="2.0" fill="#00ff00"/>
<path d="M714 364.5H833" stroke="#00ffff" stroke-width="1"/>
<path d="M833 357V364.5" stroke="#00ffff" stroke-width="1"/>
<path d="M833 357V355.5 M830.5 355.5H835.5V352H832" stroke="#00ff00" stroke-width="1" fill="none"/>
<rect x="831" y="352.5" width="2.5" height="2.0" fill="#00ff00"/>
<path d="M710 334 Q717 336 719 344" stroke="#00ff00" stroke-width="1" fill="none"/>
<path d="M719 356.5 Q717 364 710.5 366.5" stroke="#00ff00" stroke-width="1" fill="none"/>
<rect x="763" y="345" width="12" height="12" fill="#c0c0c0"/>
<rect x="846" y="345" width="12" height="12" fill="#c0c0c0"/>
<rect x="759" y="331" width="2" height="3" fill="#ffffff"/>
<rect x="760" y="338" width="1" height="4" fill="#ffffff"/>
<rect x="739" y="343" width="2" height="3" fill="#ffffff"/>
<rect x="715" y="346" width="1" height="3" fill="#ffffff"/>
<rect x="723" y="354" width="2" height="3" fill="#ffffff"/>
<rect x="764" y="358" width="2" height="3" fill="#ffffff"/>
<rect x="754" y="366" width="1" height="3" fill="#ffffff"/>
<rect x="712" y="373" width="1" height="3" fill="#ffffff"/>
<rect x="777" y="383" width="9" height="3" fill="url(#tp)"/>
<path d="M712 380H713.5 M713.5 377.5V382.5H717V379" stroke="#00ff00" stroke-width="1" fill="none"/>
<rect x="714.5" y="378" width="2.0" height="2.5" fill="#00ff00"/>
<path d="M712 387H713.5 M713.5 384.5V389.5H717V386" stroke="#00ff00" stroke-width="1" fill="none"/>
<rect x="714.5" y="385" width="2.0" height="2.5" fill="#00ff00"/>
<path d="M712 394H713.5 M713.5 391.5V396.5H717V393" stroke="#00ff00" stroke-width="1" fill="none"/>
<rect x="714.5" y="392" width="2.0" height="2.5" fill="#00ff00"/>
<path d="M709 380.5H712" stroke="#00ffff" stroke-width="1"/>
<path d="M709 387.5H712" stroke="#00ffff" stroke-width="1"/>
<path d="M709 394.5H712" stroke="#00ffff" stroke-width="1"/>
<rect x="718" y="387" width="2" height="3" fill="#ffffff"/>
<rect x="733" y="397" width="2" height="3" fill="#ffffff"/>
<path d="M704 402.5H740" stroke="#00ffff" stroke-width="1"/>
<path d="M733 402.5V404.0 M730.5 404.0H735.5V407.5H732" stroke="#00ff00" stroke-width="1" fill="none"/>
<rect x="731" y="405.0" width="2.5" height="2.0" fill="#00ff00"/>
<path d="M740 402.5V404.0 M737.5 404.0H742.5V407.5H739" stroke="#00ff00" stroke-width="1" fill="none"/>
<rect x="738" y="405.0" width="2.5" height="2.0" fill="#00ff00"/>
<path d="M704 405.5H765" stroke="#00ffff" stroke-width="1"/>
<path d="M765 405V416" stroke="#00ffff" stroke-width="1"/>
<path d="M765 412 Q772 414 775 422 Q773 428 765 427" stroke="#00ff00" stroke-width="1" fill="none"/>
<path d="M704 409.5H764" stroke="#00ffff" stroke-width="1"/>
<path d="M764 409.5V413" stroke="#00ffff" stroke-width="1"/>
<path d="M704 412.5 L774 420.5" stroke="#00ffff" stroke-width="1" fill="none"/>
<path d="M704 414.5 L780 425" stroke="#00ffff" stroke-width="1" fill="none"/>
<path d="M704 416.5 L724 428" stroke="#00ffff" stroke-width="1" fill="none"/>
<path d="M704 418.5 L716 428" stroke="#00ffff" stroke-width="1" fill="none"/>
<path d="M774 420.5 L790 422 L790 457" stroke="#00ffff" stroke-width="1" fill="none"/>
<path d="M780 425 L800 427 L800 462" stroke="#00ffff" stroke-width="1" fill="none"/>
<path d="M704 428H750" stroke="#00ffff" stroke-width="1"/>
<path d="M760 428V438" stroke="#00ffff" stroke-width="1"/>
<path d="M760 428H763" stroke="#00ffff" stroke-width="1"/>
<path d="M717.5 428V429.5 M715.0 429.5H720.0V433H716.5" stroke="#00ff00" stroke-width="1" fill="none"/>
<rect x="715.5" y="430.5" width="2.5" height="2.0" fill="#00ff00"/>
<path d="M724 428V429.5 M721.5 429.5H726.5V433H723" stroke="#00ff00" stroke-width="1" fill="none"/>
<rect x="722" y="430.5" width="2.5" height="2.0" fill="#00ff00"/>
<path d="M730 428V429.5 M727.5 429.5H732.5V433H729" stroke="#00ff00" stroke-width="1" fill="none"/>
<rect x="728" y="430.5" width="2.5" height="2.0" fill="#00ff00"/>
<path d="M750 428 Q752 437 760 438" stroke="#00ff00" stroke-width="1" fill="none"/>
<path d="M692 428H702" stroke="#00ffff" stroke-width="1"/>
<rect x="680" y="427" width="12" height="13" fill="#c0c0c0"/>
<rect x="763" y="427" width="12" height="13" fill="#c0c0c0"/>
<rect x="846" y="427" width="12" height="13" fill="#c0c0c0"/>
<rect x="763" y="483" width="12" height="12" fill="#c0c0c0"/>
<path d="M774 440 L810 486" stroke="#00ffff" stroke-width="1" fill="none"/>
<path d="M776 439 L812 485" stroke="#00ffff" stroke-width="1" fill="none"/>
<path d="M702 457.5H785" stroke="#00ffff" stroke-width="1"/>
<path d="M700 466.5H789" stroke="#00ffff" stroke-width="1"/>
<path d="M787 454V455.5 M784.5 455.5H789.5V459H786" stroke="#00ff00" stroke-width="1" fill="none"/>
<rect x="785" y="456.5" width="2.5" height="2.0" fill="#00ff00"/>
<path d="M790 462V463.5 M787.5 463.5H792.5V467H789" stroke="#00ff00" stroke-width="1" fill="none"/>
<rect x="788" y="464.5" width="2.5" height="2.0" fill="#00ff00"/>
<path d="M787 446V447.5 M784.5 447.5H789.5V451H786" stroke="#00ff00" stroke-width="1" fill="none"/>
<rect x="785" y="448.5" width="2.5" height="2.0" fill="#00ff00"/>
<rect x="727" y="450" width="1" height="3" fill="#ffffff"/>
<rect x="702" y="488" width="2" height="3" fill="#ffffff"/>
<rect x="714" y="456" width="2" height="3" fill="#ffffff"/>
<rect x="744" y="472" width="9" height="4" fill="url(#tp)"/>
<rect x="785" y="418" width="2" height="3" fill="#ffffff"/>
<rect x="754" y="422" width="2" height="3" fill="#ffffff"/>
<rect x="735" y="419" width="2" height="3" fill="#ffffff"/>
<path d="M694.5 420V466.5" stroke="#00ffff" stroke-width="1"/>
<path d="M688 466.5H694.5" stroke="#00ffff" stroke-width="1"/>
<path d="M688 466.5H689.5 M689.5 464.0V469.0H693V465.5" stroke="#00ff00" stroke-width="1" fill="none"/>
<rect x="690.5" y="464.5" width="2.0" height="2.5" fill="#00ff00"/>
<path d="M699.5 420V477.5" stroke="#00ffff" stroke-width="1"/>
<path d="M688 477.5H699.5" stroke="#00ffff" stroke-width="1"/>
<path d="M688 477.5H689.5 M689.5 475.0V480.0H693V476.5" stroke="#00ff00" stroke-width="1" fill="none"/>
<rect x="690.5" y="475.5" width="2.0" height="2.5" fill="#00ff00"/>
<path d="M697 420V492.5" stroke="#00ffff" stroke-width="1"/>
<path d="M688 492.5H697" stroke="#00ffff" stroke-width="1"/>
<path d="M688 492.5H689.5 M689.5 490.0V495.0H693V491.5" stroke="#00ff00" stroke-width="1" fill="none"/>
<rect x="690.5" y="490.5" width="2.0" height="2.5" fill="#00ff00"/>
<path d="M701.5 420V503.5" stroke="#00ffff" stroke-width="1"/>
<path d="M688 503.5H701.5" stroke="#00ffff" stroke-width="1"/>
<path d="M688 503.5H689.5 M689.5 501.0V506.0H693V502.5" stroke="#00ff00" stroke-width="1" fill="none"/>
<rect x="690.5" y="501.5" width="2.0" height="2.5" fill="#00ff00"/>
<rect x="675" y="494" width="2" height="3" fill="#ffffff"/>
<path d="M441.5 420V510" stroke="#00ffff" stroke-width="1"/>
<path d="M444.5 420V510" stroke="#00ffff" stroke-width="1"/>
<rect x="441" y="427" width="13" height="13" fill="#c0c0c0"/>
<rect x="514" y="427" width="12" height="13" fill="#c0c0c0"/>
<rect x="597" y="427" width="12" height="13" fill="#c0c0c0"/>
<rect x="429" y="511" width="10" height="11" fill="#c0c0c0"/>
<rect x="441" y="510" width="13" height="13" fill="#c0c0c0"/>
<rect x="514" y="510" width="12" height="13" fill="#c0c0c0"/>
<rect x="597" y="510" width="12" height="13" fill="#c0c0c0"/>
<rect x="680" y="510" width="12" height="13" fill="#c0c0c0"/>
<rect x="429" y="594" width="10" height="10" fill="#c0c0c0"/>
<path d="M437 604V619" stroke="#00ffff" stroke-width="1"/>
<path d="M439 604V617" stroke="#00ffff" stroke-width="1"/>
<path d="M416 517.5H430" stroke="#00ffff" stroke-width="1"/>
<path d="M416 519.5H430" stroke="#00ffff" stroke-width="1"/>
<path d="M426.5 519V544" stroke="#00ff00" stroke-width="1"/>
<path d="M426 544.5H434" stroke="#ffffff" stroke-width="1.5"/>
<path d="M416 617.5H439" stroke="#00ffff" stroke-width="1"/>
<path d="M416 619.5H437" stroke="#00ffff" stroke-width="1"/>
<path d="M454 428H470.5" stroke="#00ffff" stroke-width="1"/>
<path d="M486.5 428H514" stroke="#00ffff" stroke-width="1"/>
<path d="M538.5 428H584.5" stroke="#00ffff" stroke-width="1"/>
<path d="M609 428H611" stroke="#00ffff" stroke-width="1"/>
<path d="M621.5 428H667" stroke="#00ffff" stroke-width="1"/>
<path d="M676 428H680" stroke="#00ffff" stroke-width="1"/>
<path d="M470.5 428 V436 Q474 438 478 430 Q482 438 486.5 436 V428" stroke="#00ff00" stroke-width="1" fill="none"/>
<path d="M526 438 Q534 436 538.5 428" stroke="#00ff00" stroke-width="1" fill="none"/>
<path d="M584.5 428 Q587 437 594 438.5" stroke="#00ff00" stroke-width="1" fill="none"/>
<path d="M611 438 Q619 436 621.5 428" stroke="#00ff00" stroke-width="1" fill="none"/>
<path d="M667 428 Q670 437 676 437.5" stroke="#00ff00" stroke-width="1" fill="none"/>
<path d="M504.5 428V429.5 M502.0 429.5H507.0V433H503.5" stroke="#00ff00" stroke-width="1" fill="none"/>
<rect x="502.5" y="430.5" width="2.5" height="2.0" fill="#00ff00"/>
<path d="M548 428V429.5 M545.5 429.5H550.5V433H547" stroke="#00ff00" stroke-width="1" fill="none"/>
<rect x="546" y="430.5" width="2.5" height="2.0" fill="#00ff00"/>
<path d="M569.5 428V429.5 M567.0 429.5H572.0V433H568.5" stroke="#00ff00" stroke-width="1" fill="none"/>
<rect x="567.5" y="430.5" width="2.5" height="2.0" fill="#00ff00"/>
<path d="M576.5 428V429.5 M574.0 429.5H579.0V433H575.5" stroke="#00ff00" stroke-width="1" fill="none"/>
<rect x="574.5" y="430.5" width="2.5" height="2.0" fill="#00ff00"/>
<path d="M634 428V429.5 M631.5 429.5H636.5V433H633" stroke="#00ff00" stroke-width="1" fill="none"/>
<rect x="632" y="430.5" width="2.5" height="2.0" fill="#00ff00"/>
<path d="M651 428V429.5 M648.5 429.5H653.5V433H650" stroke="#00ff00" stroke-width="1" fill="none"/>
<rect x="649" y="430.5" width="2.5" height="2.0" fill="#00ff00"/>
<path d="M548 420V428" stroke="#00ffff" stroke-width="1"/>
<path d="M569.5 420V428" stroke="#00ffff" stroke-width="1"/>
<path d="M576.5 420V428" stroke="#00ffff" stroke-width="1"/>
<path d="M634 420V428" stroke="#00ffff" stroke-width="1"/>
<path d="M651 420V428" stroke="#00ffff" stroke-width="1"/>
<path d="M456.5 420V470" stroke="#00ffff" stroke-width="1"/>
<path d="M447 470.5H456.5" stroke="#00ffff" stroke-width="1"/>
<path d="M447 470.5H445.5 M445.5 468.0V473.0H442V469.5" stroke="#00ff00" stroke-width="1" fill="none"/>
<rect x="442.5" y="468.5" width="2.0" height="2.5" fill="#00ff00"/>
<path d="M459.5 420V476" stroke="#00ffff" stroke-width="1"/>
<path d="M447 476.5H459.5" stroke="#00ffff" stroke-width="1"/>
<path d="M447 476.5H445.5 M445.5 474.0V479.0H442V475.5" stroke="#00ff00" stroke-width="1" fill="none"/>
<rect x="442.5" y="474.5" width="2.0" height="2.5" fill="#00ff00"/>
<path d="M519.5 440V510" stroke="#00ffff" stroke-width="2"/>
<path d="M603 440V510" stroke="#00ffff" stroke-width="2"/>
<path d="M686 440V510" stroke="#00ffff" stroke-width="2"/>
<path d="M497 420V493.5" stroke="#00ffff" stroke-width="1"/>
<path d="M497 493.5H518" stroke="#00ffff" stroke-width="1"/>
<path d="M518 493.5H516.5 M516.5 491.0V496.0H513V492.5" stroke="#00ff00" stroke-width="1" fill="none"/>
<rect x="513.5" y="491.5" width="2.0" height="2.5" fill="#00ff00"/>
<path d="M500 420V485.5" stroke="#00ffff" stroke-width="1"/>
<path d="M500 485.5H518" stroke="#00ffff" stroke-width="1"/>
<path d="M518 485.5H516.5 M516.5 483.0V488.0H513V484.5" stroke="#00ff00" stroke-width="1" fill="none"/>
<rect x="513.5" y="483.5" width="2.0" height="2.5" fill="#00ff00"/>
<path d="M511 420V460.5" stroke="#00ffff" stroke-width="1"/>
<path d="M511 460.5H518" stroke="#00ffff" stroke-width="1"/>
<path d="M518 460.5H516.5 M516.5 458.0V463.0H513V459.5" stroke="#00ff00" stroke-width="1" fill="none"/>
<rect x="513.5" y="458.5" width="2.0" height="2.5" fill="#00ff00"/>
<path d="M513.5 420V452.5" stroke="#00ffff" stroke-width="1"/>
<path d="M513.5 452.5H518" stroke="#00ffff" stroke-width="1"/>
<path d="M518 452.5H516.5 M516.5 450.0V455.0H513V451.5" stroke="#00ff00" stroke-width="1" fill="none"/>
<rect x="513.5" y="450.5" width="2.0" height="2.5" fill="#00ff00"/>
<path d="M530.5 420V466.5" stroke="#00ffff" stroke-width="1"/>
<path d="M522 466.5H530.5" stroke="#00ffff" stroke-width="1"/>
<path d="M522 466.5H523.5 M523.5 464.0V469.0H527V465.5" stroke="#00ff00" stroke-width="1" fill="none"/>
<rect x="524.5" y="464.5" width="2.0" height="2.5" fill="#00ff00"/>
<path d="M534.5 420V481.5" stroke="#00ffff" stroke-width="1"/>
<path d="M522 481.5H534.5" stroke="#00ffff" stroke-width="1"/>
<path d="M522 481.5H523.5 M523.5 479.0V484.0H527V480.5" stroke="#00ff00" stroke-width="1" fill="none"/>
<rect x="524.5" y="479.5" width="2.0" height="2.5" fill="#00ff00"/>
<path d="M593.5 420V481.5" stroke="#00ffff" stroke-width="1"/>
<path d="M593.5 481.5H601.5" stroke="#00ffff" stroke-width="1"/>
<path d="M601.5 481.5H600.0 M600.0 479.0V484.0H596.5V480.5" stroke="#00ff00" stroke-width="1" fill="none"/>
<rect x="597.0" y="479.5" width="2.0" height="2.5" fill="#00ff00"/>
<path d="M595.5 420V466.5" stroke="#00ffff" stroke-width="1"/>
<path d="M595.5 466.5H601.5" stroke="#00ffff" stroke-width="1"/>
<path d="M601.5 466.5H600.0 M600.0 464.0V469.0H596.5V465.5" stroke="#00ff00" stroke-width="1" fill="none"/>
<rect x="597.0" y="464.5" width="2.0" height="2.5" fill="#00ff00"/>
<path d="M612 420V471.5" stroke="#00ffff" stroke-width="1"/>
<path d="M605 471.5H612" stroke="#00ffff" stroke-width="1"/>
<path d="M605 471.5H606.5 M606.5 469.0V474.0H610V470.5" stroke="#00ff00" stroke-width="1" fill="none"/>
<rect x="607.5" y="469.5" width="2.0" height="2.5" fill="#00ff00"/>
<path d="M614 420V481.5" stroke="#00ffff" stroke-width="1"/>
<path d="M605 481.5H614" stroke="#00ffff" stroke-width="1"/>
<path d="M605 481.5H606.5 M606.5 479.0V484.0H610V480.5" stroke="#00ff00" stroke-width="1" fill="none"/>
<rect x="607.5" y="479.5" width="2.0" height="2.5" fill="#00ff00"/>
<path d="M671 420V481.5" stroke="#00ffff" stroke-width="1"/>
<path d="M671 481.5H683" stroke="#00ffff" stroke-width="1"/>
<path d="M683 481.5H681.5 M681.5 479.0V484.0H678V480.5" stroke="#00ff00" stroke-width="1" fill="none"/>
<rect x="678.5" y="479.5" width="2.0" height="2.5" fill="#00ff00"/>
<path d="M676 420V471.5" stroke="#00ffff" stroke-width="1"/>
<path d="M676 471.5H683" stroke="#00ffff" stroke-width="1"/>
<path d="M683 471.5H681.5 M681.5 469.0V474.0H678V470.5" stroke="#00ff00" stroke-width="1" fill="none"/>
<rect x="678.5" y="469.5" width="2.0" height="2.5" fill="#00ff00"/>
<rect x="453" y="453" width="2" height="3" fill="#ffffff"/>
<rect x="460" y="452" width="1" height="3" fill="#ffffff"/>
<rect x="494" y="453" width="2" height="3" fill="#ffffff"/>
<rect x="501" y="462" width="2" height="4" fill="#ffffff"/>
<rect x="505" y="422" width="2" height="4" fill="#ffffff"/>
<rect x="508" y="448" width="1" height="3" fill="#ffffff"/>
<rect x="514" y="445" width="2" height="3" fill="#ffffff"/>
<rect x="527" y="450" width="2" height="3" fill="#ffffff"/>
<rect x="545" y="424" width="1" height="3" fill="#ffffff"/>
<rect x="567" y="424" width="1" height="3" fill="#ffffff"/>
<rect x="578" y="423" width="2" height="3" fill="#ffffff"/>
<rect x="528" y="450" width="1" height="3" fill="#ffffff"/>
<rect x="535" y="459" width="1" height="3" fill="#ffffff"/>
<rect x="590" y="460" width="2" height="3" fill="#ffffff"/>
<rect x="597" y="452" width="1" height="3" fill="#ffffff"/>
<rect x="608" y="455" width="2" height="3" fill="#ffffff"/>
<rect x="616" y="459" width="2" height="3" fill="#ffffff"/>
<rect x="627" y="449" width="2" height="3" fill="#ffffff"/>
<rect x="643" y="470" width="2" height="3" fill="#ffffff"/>
<rect x="679" y="462" width="2" height="3" fill="#ffffff"/>
<rect x="689" y="454" width="2" height="3" fill="#ffffff"/>
<rect x="468" y="450" width="8" height="4" fill="url(#tp)"/>
<rect x="553" y="469" width="8" height="4" fill="url(#tp)"/>
<rect x="639" y="471" width="9" height="3" fill="url(#tp)"/>
<path d="M454 520.5 L485 520.5 L485 525.5 L519 525.5 L519.5 533 L531 533 L580 535.5 L686 540 L686 532.5 L711 532.5 L711 526.5 L736.5 526.5" stroke="#ffffff" stroke-width="1.2" fill="none"/>
<path d="M736.5 526.5 L736.5 519 L761 516.5 L760.5 510 L785 505.5 L784.5 498 L809 492.5 L808.5 485.5 L831 477 L830.5 471 L853.5 461 L852 455.5 L868.5 441" stroke="#ffffff" stroke-width="1.2" fill="none"/>
<path d="M441 524 L481 524 L481 528.5 L516 528.5 L516 536.5 L520 538 L580 539.5 L675 544 L692 544" stroke="#00ff00" stroke-width="3.6" fill="none"/>
<rect x="675" y="540" width="22" height="6" fill="#00ff00"/>
<rect x="688" y="535" width="4" height="6" fill="#00ff00"/>
<path d="M690 537 L711 537" stroke="#00ff00" stroke-width="3.2" fill="none"/>
<rect x="709" y="535" width="13" height="5" fill="#00ff00"/>
<rect x="713" y="528" width="4" height="8" fill="#00ff00"/>
<path d="M738 527.5 L762 521" stroke="#00ff00" stroke-width="3.4" fill="none"/>
<path d="M762 521 L762 515" stroke="#00ff00" stroke-width="3.4" fill="none"/>
<path d="M762 515 L786.5 508" stroke="#00ff00" stroke-width="3.4" fill="none"/>
<path d="M786.5 508 L786.5 502" stroke="#00ff00" stroke-width="3.4" fill="none"/>
<path d="M786.5 502 L810.5 495" stroke="#00ff00" stroke-width="3.4" fill="none"/>
<path d="M810.5 495 L810.5 489" stroke="#00ff00" stroke-width="3.4" fill="none"/>
<path d="M810.5 489 L832.5 480" stroke="#00ff00" stroke-width="3.4" fill="none"/>
<path d="M832.5 480 L832.5 473.5" stroke="#00ff00" stroke-width="3.4" fill="none"/>
<path d="M832.5 473.5 L856 462.5" stroke="#00ff00" stroke-width="3.4" fill="none"/>
<path d="M856 462.5 L856 457.5" stroke="#00ff00" stroke-width="3.4" fill="none"/>
<path d="M713 530 L738 529 L738 527.5" stroke="#00ff00" stroke-width="3.4" fill="none"/>
<rect x="720" y="527" width="27" height="5" fill="#00ff00"/>
<rect x="760" y="518" width="12" height="4" fill="#00ff00"/>
<rect x="784" y="505" width="13" height="5" fill="#00ff00"/>
<rect x="808" y="492" width="13" height="4" fill="#00ff00"/>
<rect x="830" y="477" width="13" height="4" fill="#00ff00"/>
<rect x="853" y="460" width="13" height="4" fill="#00ff00"/>
<path d="M856 457.5 L882 436" stroke="#00ff00" stroke-width="3.2" fill="none"/>
<path d="M857 455.5 L880 436.5" stroke="#000" stroke-width="0.6" fill="none"/>
<path d="M515 522V533" stroke="#00ffff" stroke-width="1"/>
<path d="M517 522V533" stroke="#00ffff" stroke-width="1"/>
<path d="M602.5 522V537" stroke="#00ffff" stroke-width="1.5"/>
<path d="M686 522V535" stroke="#00ffff" stroke-width="1.5"/>
<path d="M441.5 505V510" stroke="#00ffff" stroke-width="1"/>
<path d="M444.5 505V510" stroke="#00ffff" stroke-width="1"/>
<path d="M856 274 L862.5 370 L865.5 421 L867.5 441" stroke="#ffffff" stroke-width="1.2" fill="none"/>
<path d="M860 262 L866.5 370 L870 440" stroke="#00ff00" stroke-width="3.6" fill="none"/>
</svg>
<!--/DRAWING-->

<!-- layout tabs -->
<div class="a" style="left:1px;top:741px;width:98px;height:25px;border-right:1px solid #c8c8cc"></div>
<div class="lt" style="left:99px;background:#dcdcde;color:#1a7fe0">模型</div>
<div class="lt" style="left:169px">布局1</div>
<div class="lt" style="left:239px;width:69px">布局2</div>

<!-- bottom bar -->
<div class="bt" style="left:1px;width:99px"><span style="margin-left:22px">发现</span></div>
<div class="bt" style="left:100px;width:99px">设计画图</div>
<div class="bt" style="left:199px;width:99px">家装设计</div>
<div class="bt" style="left:298px;width:99px">园林设计</div>
<div class="bt" style="left:397px;width:99px">手机看图</div>
<div class="bt" style="left:496px;width:99px">正版授权</div>
<div class="bt" style="left:595px;width:99px">橱柜设计</div>
<div class="bt" style="left:694px;width:99px">在线CAD</div>
<div class="a" style="left:850px;top:771px;width:168px;height:24px;background:#fff;border:1px solid #bdbdc2"></div>
<div class="a" style="left:853px;top:774px;font-size:13px;line-height:16px;color:#9a9a9a">查找文字</div>
<div class="a" style="left:1017px;top:771px;width:49px;height:24px;background:#d8d8da;border:1px solid #c4c4c8;border-left:none;border-radius:0 3px 3px 0"></div>
<div class="a" style="left:1076px;top:770px;width:24px;height:24px;background:#d6d6d9"></div>
<div class="a" style="left:1105px;top:770px;width:24px;height:24px;background:#d6d6d9"></div>
<div class="a" style="left:1134px;top:770px;width:24px;height:24px;background:#d6d6d9"></div>
<div class="a" style="left:1163px;top:770px;width:24px;height:24px;background:#d6d6d9"></div>
<svg style="left:0;top:0" width="1280" height="800">
<g fill="#c4c5cc">
<rect x="8" y="749" width="1.3" height="11"/>
<path d="M10 754.5 L18.5 749.5 V759.5 Z"/>
<path d="M33.5 754.5 L42 749.5 V759.5 Z"/>
<path d="M66.5 754.5 L58 749.5 V759.5 Z"/>
<path d="M89.5 754.5 L81 749.5 V759.5 Z"/>
<rect x="90" y="749" width="1.3" height="11"/>
</g>
<g fill="none" stroke="#555" stroke-width="1.3">
<rect x="29.7" y="776.7" width="4.6" height="4.6" rx="1"/>
<rect x="36.2" y="776.7" width="4.6" height="4.6" rx="1"/>
<rect x="29.7" y="783.2" width="4.6" height="4.6" rx="1"/>
<rect x="36.2" y="783.2" width="4.6" height="4.6" rx="1"/>
</g>
<g fill="none" stroke="#3c4450" stroke-width="1.8">
<circle cx="1039.7" cy="780.5" r="5.6"/>
<path d="M1043.8 784.6 L1049 789.8" stroke-width="2.2"/>
</g>
<g fill="none" stroke="#1a80ea" stroke-width="1.2">
<circle cx="1083.5" cy="776.6" r="1.9"/>
<circle cx="1094.5" cy="776.6" r="1.9"/>
<path d="M1086 776.6 H1087.5 M1089 776.6 H1090.5"/>
</g>
<g fill="#1a80ea">
<path d="M1085.5 778.5 L1088 781.5 H1086.3 V783.7 H1088.5 V782 L1091.5 784.5 L1088.5 787 V785.3 H1086.3 V787.5 H1088 L1085.5 790.5 L1083 787.5 H1084.7 V785.3 H1082.5 V787 L1079.5 784.5 L1082.5 782 V783.7 H1084.7 V781.5 H1083 Z"/>
<text x="1113.6" y="781.3" font-size="6.5" font-weight="bold" font-family="Liberation Sans">N</text>
<rect x="1109.3" y="784.8" width="5" height="1.3"/>
<rect x="1111.2" y="782.8" width="1.3" height="5.2"/>
<rect x="1115.5" y="785" width="1" height="1"/><rect x="1117.5" y="785" width="1" height="1"/>
<rect x="1138" y="788" width="16.5" height="2.5"/>
<rect x="1168" y="781.3" width="14.3" height="1.6"/>
<rect x="1174.3" y="774.8" width="1.6" height="14.5"/>
</g>
<g fill="none" stroke="#1a80ea" stroke-width="1.2">
<path d="M1119.5 783 Q1121.5 785.5 1119.5 788 M1123 783 Q1121 785.5 1123 788"/>
<rect x="1140.6" y="775.1" width="11" height="11"/>
<path d="M1143.5 778 V784 H1148 Z" stroke-width="1"/>
</g>
<g fill="none" stroke="#333" stroke-width="1.2">
<path d="M1203.9 774.8 L1206 779.6 L1211 780 L1207.2 783.3 L1208.5 788.4 L1203.9 785.6 L1199.3 788.4 L1200.6 783.3 L1196.8 780 L1201.8 779.6 Z"/>
<rect x="1225.6" y="778.6" width="9.2" height="10.2" stroke-width="1.3"/>
<rect x="1230.4" y="774.3" width="9.5" height="9.8" stroke-width="1.3"/>
<path d="M1225.6 778.6 L1230.4 774.3 M1234.8 778.6 L1239.9 774.3 M1225.6 788.8 L1230.4 784.1 M1234.8 788.8 L1239.9 784.1" stroke-width="1.1"/>
<ellipse cx="1262.5" cy="782" rx="8.5" ry="5.2" transform="rotate(-35 1262.5 782)"/>
<circle cx="1268.5" cy="778.3" r="3.2" fill="#e6e7ea"/>
</g>
</svg>
<div id="winb" class="a" style="left:0;top:0;width:1280px;height:800px;border:1px solid #0a78e8;pointer-events:none"></div>
</body></html>
